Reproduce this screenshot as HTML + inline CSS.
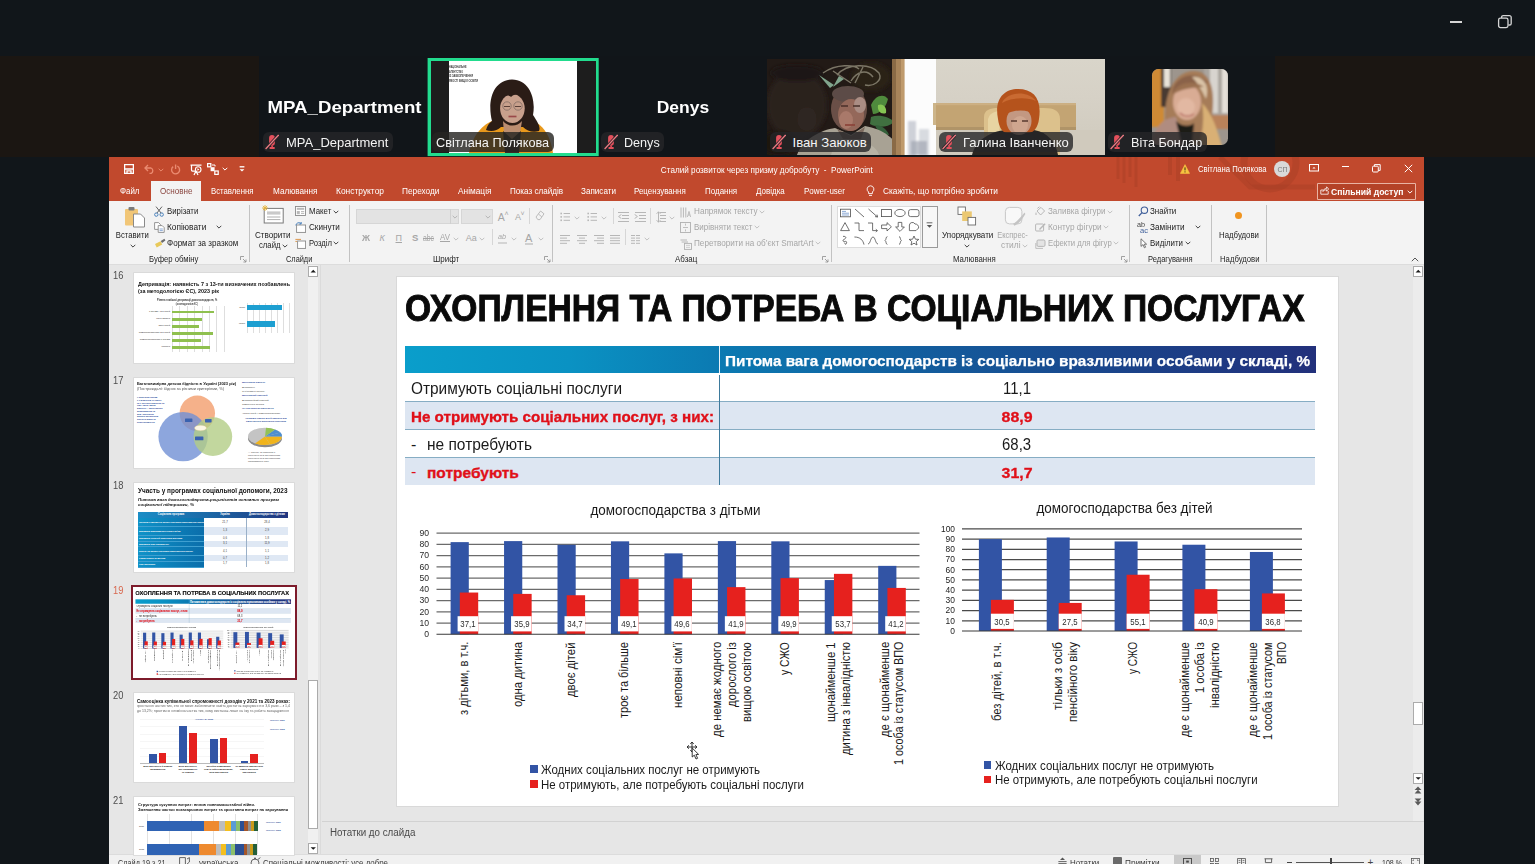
<!DOCTYPE html>
<html lang="uk"><head><meta charset="utf-8"><title>PowerPoint</title><style>
html,body{margin:0;padding:0;}
body{width:1535px;height:864px;overflow:hidden;background:#11161a;position:relative;font-family:"Liberation Sans",sans-serif;}
body div,body svg,body span.t{position:absolute;}
span.t{white-space:pre;display:block;}
.rot{transform:rotate(-90deg);transform-origin:0 0;text-align:right;white-space:pre;}
</style></head><body>
<div style="left:0px;top:56px;width:259px;height:101px;background:#1b1612;"></div>
<div style="left:1275px;top:56px;width:260px;height:101px;background:#1b1612;"></div>
<div style="left:259px;top:56px;width:1016px;height:101px;background:#111519;"></div>
<div style="left:1449.8px;top:21.4px;width:12.2px;height:1.3px;background:#d6d6d6;"></div>
<svg style="left:1497px;top:14px;" width="16" height="16" viewBox="0 0 16 16"><rect x="1.6" y="4.2" width="9.4" height="9.4" rx="1.8" fill="none" stroke="#d6d6d6" stroke-width="1.3"/><path d="M4.6 4 V3.2 A1.6 1.6 0 0 1 6.2 1.6 H12.4 A1.8 1.8 0 0 1 14.2 3.4 V9.4 A1.6 1.6 0 0 1 12.6 11 H11.4" fill="none" stroke="#d6d6d6" stroke-width="1.3"/></svg>
<span class="t" style="top:100.15px;font-size:16.6px;line-height:16.6px;color:#ffffff;font-weight:700;left:276.46px;transform:scaleX(1.1234);transform-origin:50% 0;">MPA_Department</span>
<div style="left:263px;top:131.8px;width:130px;height:20.3px;background:rgba(38,38,40,0.80);border-radius:6px;"></div>
<svg style="left:265.1px;top:134px;" width="14" height="16" viewBox="0 0 14 16"><rect x="4.1" y="1.1" width="5.8" height="10.6" rx="2.9" fill="#e4505c"/><rect x="4.4" y="13.1" width="5.4" height="1.8" rx="0.6" fill="#e4505c"/><rect x="6.3" y="11.4" width="1.6" height="2" fill="#e4505c"/><path d="M0.6 15 L13.6 1" stroke="#2a2628" stroke-width="2.8"/><path d="M0.6 15 L13.6 1" stroke="#f07d86" stroke-width="1.15"/></svg>
<span class="t" style="top:136.23px;font-size:13.2px;line-height:13.2px;color:#f4f4f4;left:286.30px;transform:scaleX(0.9861);transform-origin:0 0;">MPA_Department</span>
<span class="t" style="top:100.15px;font-size:16.6px;line-height:16.6px;color:#ffffff;font-weight:700;left:658.09px;transform:scaleX(1.0540);transform-origin:50% 0;">Denys</span>
<div style="left:601px;top:131.8px;width:63px;height:20.3px;background:rgba(38,38,40,0.80);border-radius:6px;"></div>
<svg style="left:603.6px;top:134px;" width="14" height="16" viewBox="0 0 14 16"><rect x="4.1" y="1.1" width="5.8" height="10.6" rx="2.9" fill="#e4505c"/><rect x="4.4" y="13.1" width="5.4" height="1.8" rx="0.6" fill="#e4505c"/><rect x="6.3" y="11.4" width="1.6" height="2" fill="#e4505c"/><path d="M0.6 15 L13.6 1" stroke="#2a2628" stroke-width="2.8"/><path d="M0.6 15 L13.6 1" stroke="#f07d86" stroke-width="1.15"/></svg>
<span class="t" style="top:136.23px;font-size:13.2px;line-height:13.2px;color:#f4f4f4;left:624.30px;transform:scaleX(0.9548);transform-origin:0 0;">Denys</span>
<div style="left:766.6px;top:59px;width:169.4px;height:96px;overflow:hidden;background:#211915;"><svg style="left:0;top:0" width="170" height="96" viewBox="0 0 170 96"><defs><filter id="b1a" x="-20%" y="-20%" width="140%" height="140%"><feGaussianBlur stdDeviation="1.1"/></filter><filter id="b2a" x="-20%" y="-20%" width="140%" height="140%"><feGaussianBlur stdDeviation="2.2"/></filter><filter id="b0a" x="-20%" y="-20%" width="140%" height="140%"><feGaussianBlur stdDeviation="0.5"/></filter></defs><rect width="126" height="96" fill="#221a16"/><g filter="url(#b2a)"><ellipse cx="30" cy="46" rx="30" ry="34" fill="#2a211d"/><ellipse cx="30" cy="14" rx="26" ry="8" fill="#1d1613"/><ellipse cx="104" cy="18" rx="20" ry="14" fill="#292019"/><ellipse cx="12" cy="84" rx="18" ry="12" fill="#1a1310"/><ellipse cx="40" cy="60" rx="10" ry="12" fill="#2f2621"/></g><g filter="url(#b0a)"><g fill="none" stroke="#85806f" stroke-width="1.4" opacity="0.9"><path d="M56 14 C70 4 88 6 92 10 M70 16 C80 4 104 4 112 14 C116 22 106 28 98 26 M84 22 C90 12 100 10 106 18 M66 12 L84 24 M96 8 L88 24"/></g><g fill="#86ad94" opacity="0.95"><path d="M52 16 L63 29 L67 26 Z"/><path d="M66 28 L72 17 L77 20 Z"/></g><g><path d="M104 46 C108 36 117 34 121 40 C119 49 112 55 106 55 Z" fill="#4f8a3c"/><path d="M104 58 C112 55 123 58 127 63 C120 69 110 69 103 65 Z" fill="#3f7040"/><path d="M111 46 C116 44 120 48 119 54 C114 56 110 52 111 46 Z" fill="#86c552"/><path d="M108 66 C114 66 120 70 122 76 C114 76 110 72 108 66 Z" fill="#35603a"/></g><ellipse cx="82" cy="50" rx="18" ry="22" fill="#6a5046"/><ellipse cx="81" cy="35" rx="16" ry="8" fill="#5c4c46"/><ellipse cx="84" cy="56" rx="13" ry="16" fill="#94685a"/><ellipse cx="79" cy="61" rx="7" ry="9" fill="#a9796a"/><ellipse cx="93" cy="46" rx="6" ry="8" fill="#aa8d84"/><path d="M74 47 H81 M86 47 H93" stroke="#4a3028" stroke-width="1.4"/><path d="M78 66 H88" stroke="#8a4038" stroke-width="1.6"/><path d="M30 96 C36 80 54 71 68 69 L84 76 L98 67 C116 70 130 80 135 96 Z" fill="#a8a294"/><path d="M70 70 L84 77 L98 68 L94 80 L76 80 Z" fill="#7c6a5e"/><path d="M64 96 C66 86 76 82 86 82 C100 82 110 88 112 96 Z" fill="#b7b2a4"/></g><rect x="125" y="0" width="13" height="96" fill="#a8845a"/><rect x="125" y="0" width="4" height="96" fill="#8a6a46"/><rect x="134" y="0" width="4" height="96" fill="#c4a070" opacity="0.8"/><rect x="137.6" y="0" width="33" height="96" fill="#fcfcfc"/><g filter="url(#b1a)"><rect x="141" y="62" width="8" height="36" fill="#c3c6d0" opacity="0.8"/><rect x="152" y="70" width="10" height="28" fill="#d0d3da" opacity="0.8"/><rect x="144" y="82" width="16" height="14" fill="#a2a6b2" opacity="0.7"/></g><rect x="166" y="44" width="4" height="22" fill="#cdb58a"/></svg></div>
<div style="left:770px;top:131.8px;width:101px;height:20.3px;background:rgba(38,38,40,0.80);border-radius:6px;"></div>
<svg style="left:772.1px;top:134px;" width="14" height="16" viewBox="0 0 14 16"><rect x="4.1" y="1.1" width="5.8" height="10.6" rx="2.9" fill="#e4505c"/><rect x="4.4" y="13.1" width="5.4" height="1.8" rx="0.6" fill="#e4505c"/><rect x="6.3" y="11.4" width="1.6" height="2" fill="#e4505c"/><path d="M0.6 15 L13.6 1" stroke="#2a2628" stroke-width="2.8"/><path d="M0.6 15 L13.6 1" stroke="#f07d86" stroke-width="1.15"/></svg>
<span class="t" style="top:136.23px;font-size:13.2px;line-height:13.2px;color:#f4f4f4;left:792.50px;">Іван Заюков</span>
<div style="left:936px;top:59px;width:169px;height:96px;overflow:hidden;background:linear-gradient(180deg,#d9d5ca 0%,#d6d1c6 40%,#cfcabd 100%);"><svg style="left:0;top:0" width="169" height="96" viewBox="0 0 169 96"><defs><filter id="b1b" x="-20%" y="-20%" width="140%" height="140%"><feGaussianBlur stdDeviation="1.1"/></filter><filter id="b2b" x="-20%" y="-20%" width="140%" height="140%"><feGaussianBlur stdDeviation="2.2"/></filter><filter id="b0b" x="-20%" y="-20%" width="140%" height="140%"><feGaussianBlur stdDeviation="0.5"/></filter></defs><rect x="0" y="44.2" width="140" height="26" fill="#c3a473"/><rect x="0" y="44.2" width="140" height="2" fill="#cdb083"/><rect x="0" y="68" width="140" height="3" fill="#b09468"/><rect x="0" y="71" width="169" height="25" fill="#d0cabd"/><g filter="url(#b0b)"><path d="M48 96 V58 C48 51 54 49 62 49 H108 C118 49 124 52 124 60 V96 Z" fill="#dcc18c"/><path d="M52 60 C54 53 60 52 66 52 L62 80 L52 80 Z" fill="#ead8a8" opacity="0.8"/><path d="M36 96 C40 80 56 72 70 71 H98 C112 73 120 84 122 96 Z" fill="#2a2523"/><path d="M62 60 C58 40 68 30 82 30 C98 30 106 40 103 60 C102 68 98 74 92 74 H72 C66 74 63 68 62 60 Z" fill="#b5531f"/><path d="M66 44 C70 34 90 30 100 42 C92 38 76 38 66 44 Z" fill="#c96a30"/><ellipse cx="83" cy="62" rx="12.5" ry="14" fill="#c39882"/><ellipse cx="84" cy="66" rx="8" ry="9" fill="#cfa68f"/><path d="M68 56 C72 44 94 42 100 56 C92 50 78 50 68 56 Z" fill="#b5531f"/><path d="M75 62 H81 M86 62 H92" stroke="#5a3a30" stroke-width="1.3"/><path d="M72 74 C78 78 90 78 96 73 L100 82 H68 Z" fill="#2a2523"/></g></svg></div>
<div style="left:938.9px;top:131.8px;width:133.80000000000007px;height:20.3px;background:rgba(38,38,40,0.80);border-radius:6px;"></div>
<svg style="left:941.6px;top:134px;" width="14" height="16" viewBox="0 0 14 16"><rect x="4.1" y="1.1" width="5.8" height="10.6" rx="2.9" fill="#e4505c"/><rect x="4.4" y="13.1" width="5.4" height="1.8" rx="0.6" fill="#e4505c"/><rect x="6.3" y="11.4" width="1.6" height="2" fill="#e4505c"/><path d="M0.6 15 L13.6 1" stroke="#2a2628" stroke-width="2.8"/><path d="M0.6 15 L13.6 1" stroke="#f07d86" stroke-width="1.15"/></svg>
<span class="t" style="top:136.23px;font-size:13.2px;line-height:13.2px;color:#f4f4f4;left:962.50px;transform:scaleX(0.9891);transform-origin:0 0;">Галина Іванченко</span>
<div style="left:1152px;top:68.8px;width:76px;height:76px;border-radius:6.5px;overflow:hidden;background:#9d958d;"><svg style="left:0;top:0" width="76" height="76" viewBox="0 0 76 76"><defs><filter id="b1c" x="-20%" y="-20%" width="140%" height="140%"><feGaussianBlur stdDeviation="1.1"/></filter><filter id="b2c" x="-20%" y="-20%" width="140%" height="140%"><feGaussianBlur stdDeviation="2.2"/></filter><filter id="b0c" x="-20%" y="-20%" width="140%" height="140%"><feGaussianBlur stdDeviation="0.5"/></filter></defs><g filter="url(#b1c)"><rect x="-2" y="-2" width="14" height="60" fill="#cf8a36"/><rect x="9" y="-2" width="10" height="40" fill="#4a3a30"/><rect x="12" y="-2" width="6" height="20" fill="#e8e2d8"/><rect x="52" y="-2" width="26" height="50" fill="#aaa59f"/><rect x="58" y="-2" width="8" height="46" fill="#d8d4cf"/><rect x="70" y="-2" width="6" height="46" fill="#e4dfd8"/><rect x="60" y="46" width="18" height="14" fill="#b9825a"/><path d="M14 60 C10 30 20 2 42 2 C58 2 64 20 60 48 C62 62 66 70 70 78 H30 Z" fill="#a67c58"/><path d="M20 24 C22 6 44 0 56 14 C44 14 30 18 20 24 Z" fill="#8a6248"/><path d="M40 8 C52 6 58 18 54 30 C50 22 46 14 40 8 Z" fill="#d9c2a6"/><path d="M50 34 C60 44 66 62 70 78 H46 C52 62 52 46 50 34 Z" fill="#d9b074"/><ellipse cx="35" cy="33" rx="14" ry="18" fill="#d9ac94"/><ellipse cx="34" cy="38" rx="9" ry="9" fill="#e2b8a2"/><path d="M20 26 C24 14 40 10 52 18 C42 18 28 20 20 26 Z" fill="#9a7050"/><path d="M-2 78 C2 56 14 48 24 48 L34 78 Z" fill="#b08c80"/><path d="M24 52 C30 58 38 58 42 54 L40 78 H30 Z" fill="#1e1a19"/><path d="M28 44 C32 48 38 48 42 45" stroke="#b56a62" stroke-width="1.4" fill="none"/></g></svg></div>
<div style="left:1108px;top:131.8px;width:98.79999999999995px;height:20.3px;background:rgba(38,38,40,0.80);border-radius:6px;"></div>
<svg style="left:1110.1px;top:134px;" width="14" height="16" viewBox="0 0 14 16"><rect x="4.1" y="1.1" width="5.8" height="10.6" rx="2.9" fill="#e4505c"/><rect x="4.4" y="13.1" width="5.4" height="1.8" rx="0.6" fill="#e4505c"/><rect x="6.3" y="11.4" width="1.6" height="2" fill="#e4505c"/><path d="M0.6 15 L13.6 1" stroke="#2a2628" stroke-width="2.8"/><path d="M0.6 15 L13.6 1" stroke="#f07d86" stroke-width="1.15"/></svg>
<span class="t" style="top:136.23px;font-size:13.2px;line-height:13.2px;color:#f4f4f4;left:1131.30px;transform:scaleX(0.9587);transform-origin:0 0;">Віта Бондар</span>
<svg style="left:427px;top:57px;" width="173" height="100" viewBox="0 0 173 100"><rect x="0.6" y="1" width="171.1" height="98.1" fill="#22dc8e"/></svg><div style="left:430.6px;top:61px;width:165px;height:92px;overflow:hidden;background:#1d1d1d;"><div style="left:18.2px;top:0;width:128px;height:92px;background:#ffffff;"></div><svg style="left:0;top:0" width="165" height="92" viewBox="0 0 165 92"><defs><filter id="b1d" x="-20%" y="-20%" width="140%" height="140%"><feGaussianBlur stdDeviation="1.1"/></filter><filter id="b2d" x="-20%" y="-20%" width="140%" height="140%"><feGaussianBlur stdDeviation="2.2"/></filter><filter id="b0d" x="-20%" y="-20%" width="140%" height="140%"><feGaussianBlur stdDeviation="0.5"/></filter></defs><g filter="url(#b0d)"><path d="M38 92 C42 72 54 61 66 58.5 H97 C110 61 119 72 122 92 Z" fill="#e8991c"/><path d="M61 60 C56 40 62 19 81 18.5 C99 19 105 38 102 54 C106 60 110 66 108 70 C102 72 96 70 92 66 L70 66 C66 70 60 71 55 69 C56 65 58 62 61 60 Z" fill="#2b1d19"/><ellipse cx="81.4" cy="47.6" rx="12.3" ry="14.5" fill="#c8a08c"/><path d="M66 44 C64 26 96 24 97 44 C92 34 86 31 80 36 C76 32 70 36 66 44 Z" fill="#2b1d19"/><g fill="none" stroke="#8a7268" stroke-width="0.9"><circle cx="76" cy="45" r="4.2"/><circle cx="87" cy="45" r="4.2"/></g><path d="M73 45.5 H79 M84 45.5 H90" stroke="#5a4038" stroke-width="1.1"/><path d="M77.5 55.5 H85.5" stroke="#9a4a48" stroke-width="1.7"/><path d="M72 60 C77 66 86 66 91 60 L89 72 L81 78 L73 72 Z" fill="#bb8d70"/><path d="M72 70 L81 78 L90 70 L88 92 H74 Z" fill="#3a2a22"/></g></svg></div>
<span class="t" style="top:64.81px;font-size:4px;line-height:4px;color:#3a3a3a;font-weight:700;left:449.30px;transform:scaleX(0.5833);transform-origin:0 0;">НАЦІОНАЛЬНЕ</span>
<span class="t" style="top:69.61px;font-size:4px;line-height:4px;color:#3a3a3a;font-weight:700;left:449.30px;transform:scaleX(0.5762);transform-origin:0 0;">АГЕНТСТВО</span>
<span class="t" style="top:74.41px;font-size:4px;line-height:4px;color:#3a3a3a;font-weight:700;left:449.30px;transform:scaleX(0.6339);transform-origin:0 0;">ІЗ ЗАБЕЗПЕЧЕННЯ</span>
<span class="t" style="top:79.21px;font-size:4px;line-height:4px;color:#3a3a3a;font-weight:700;left:449.30px;transform:scaleX(0.6253);transform-origin:0 0;">ЯКОСТІ ВИЩОЇ ОСВІТИ</span>
<div style="left:431.6px;top:131.8px;width:122.19999999999993px;height:20.3px;background:rgba(38,36,34,0.82);border-radius:6px;"></div>
<span class="t" style="top:136.23px;font-size:13.2px;line-height:13.2px;color:#f4f4f4;left:435.80px;transform:scaleX(0.9648);transform-origin:0 0;">Світлана Полякова</span>
<div style="left:109px;top:157px;width:1315px;height:707px;background:#e6e6e6;"></div>
<div style="left:109px;top:157px;width:1315px;height:44px;background:#c1492d;"></div>
<svg style="left:1100px;top:157px;" width="230" height="44" viewBox="0 0 230 44"><g fill="none" stroke="#a33d24" stroke-opacity="0.38"><path d="M18 0 V22 M24 0 V26 M30 0 V20 M36 0 V30" stroke-width="3"/><path d="M70 0 V18 M78 0 V24" stroke-width="4"/><circle cx="170" cy="6" r="26" stroke-width="7"/><path d="M120 0 L150 30 L215 30" stroke-width="5"/></g></svg>
<svg style="left:124px;top:164px;" width="10" height="10" viewBox="0 0 10 10"><path d="M0.6 0.6 H9.4 V9.4 H0.6 Z M0.6 5 H9.4 M3 9.4 V6.8 H7 V9.4" fill="none" stroke="#ffffff" stroke-width="1.35"/></svg>
<svg style="left:144px;top:164px;" width="11" height="10" viewBox="0 0 11 10"><path d="M4 1 L1 4 L4 7 M1 4 H7 A3 3 0 0 1 7 9.5 H5.5" fill="none" stroke="#ea8a70" stroke-width="1.35"/></svg>
<svg style="left:157.5px;top:167.5px;" width="6" height="4" viewBox="0 0 6 4"><path d="M0.7 0.8 L3 3.1 L5.3 0.8" fill="none" stroke="#ea8a70" stroke-width="1"/></svg>
<svg style="left:170px;top:163.5px;" width="11" height="11" viewBox="0 0 11 11"><path d="M7.3 2.2 A4 4 0 1 1 3.2 2.6 M5.6 0.5 V5" fill="none" stroke="#ea8a70" stroke-width="1.35"/></svg>
<svg style="left:189.5px;top:163.5px;" width="12" height="12" viewBox="0 0 12 12"><path d="M0.5 1 H11.5 M1.5 1 V6 A1 1 0 0 0 2.5 7 H5 M6 7 L4 11 M6 7 L8 11" fill="none" stroke="#ffffff" stroke-width="1.25"/><circle cx="8.2" cy="5.5" r="2.8" fill="none" stroke="#ffffff" stroke-width="1.1"/><path d="M7.4 4.3 L9.4 5.5 L7.4 6.7 Z" fill="#ffffff"/></svg>
<svg style="left:207px;top:163px;" width="12" height="12" viewBox="0 0 12 12"><rect x="0.6" y="0.6" width="3.2" height="3.2" fill="none" stroke="#ffffff" stroke-width="1.25"/><rect x="3.6" y="4.2" width="4" height="4" fill="#ffffff"/><rect x="7.8" y="8" width="3.4" height="3.4" fill="none" stroke="#ffffff" stroke-width="1.25"/><path d="M5 2 H8 V3.5" fill="none" stroke="#ffffff" stroke-width="1"/></svg>
<svg style="left:222.2px;top:167px;" width="6" height="4" viewBox="0 0 6 4"><path d="M0.7 0.8 L3 3.1 L5.3 0.8" fill="none" stroke="#ffffff" stroke-width="1"/></svg>
<svg style="left:238.5px;top:166px;" width="6" height="7" viewBox="0 0 6 7"><path d="M0.6 0.8 H5.4" stroke="#ffffff" stroke-width="1.35"/><path d="M0.6 3.2 L3 5.6 L5.4 3.2 Z" fill="#ffffff"/></svg>
<span class="t" style="top:165.98px;font-size:9px;line-height:9px;color:#ffffff;left:649.63px;transform:scaleX(0.9070);transform-origin:50% 0;">Сталий розвиток через призму добробуту  -  PowerPoint</span>
<svg style="left:1180px;top:164px;" width="10" height="10" viewBox="0 0 10 10"><path d="M5 0.6 L9.6 9.4 H0.4 Z" fill="#f6c341" stroke="#f6c341" stroke-width="0.6" stroke-linejoin="round"/><path d="M5 3.4 V6.4 M5 7.4 V8.4" stroke="#3a2a10" stroke-width="1"/></svg>
<span class="t" style="top:164.98px;font-size:9px;line-height:9px;color:#ffffff;left:1198.00px;transform:scaleX(0.8554);transform-origin:0 0;">Світлана Полякова</span>
<div style="left:1274px;top:161px;width:16px;height:16px;background:#d9d9d9;border-radius:50%;"></div>
<span class="t" style="top:165.85px;font-size:7.5px;line-height:7.5px;color:#7a7a7a;left:1276.59px;transform:scaleX(0.9249);transform-origin:50% 0;">СП</span>
<svg style="left:1308.5px;top:164px;" width="10" height="8" viewBox="0 0 10 8"><rect x="0.5" y="0.5" width="9" height="6.5" fill="none" stroke="#fff" stroke-width="1"/><path d="M3.4 4.6 L5 3 L6.6 4.6 Z" fill="#fff"/></svg>
<div style="left:1342px;top:166.3px;width:7px;height:1px;background:#ffffff;"></div>
<svg style="left:1372px;top:163.5px;" width="9" height="9" viewBox="0 0 9 9"><rect x="0.5" y="2.2" width="5.8" height="5.8" fill="none" stroke="#fff" stroke-width="1" rx="1"/><path d="M2.4 2.2 V0.6 H8.2 V6.4 H6.4" fill="none" stroke="#fff" stroke-width="1"/></svg>
<svg style="left:1404px;top:163.5px;" width="9" height="9" viewBox="0 0 9 9"><path d="M0.8 0.8 L8.2 8.2 M8.2 0.8 L0.8 8.2" stroke="#fff" stroke-width="1"/></svg>
<div style="left:151px;top:180.7px;width:50px;height:21px;background:#f3f3f3;"></div>
<span class="t" style="top:187.48px;font-size:9px;line-height:9px;color:#ffffff;left:119.50px;transform:scaleX(0.8807);transform-origin:0 0;">Файл</span>
<span class="t" style="top:187.48px;font-size:9px;line-height:9px;color:#8a4640;left:159.50px;transform:scaleX(0.8969);transform-origin:0 0;">Основне</span>
<span class="t" style="top:187.48px;font-size:9px;line-height:9px;color:#ffffff;left:210.50px;transform:scaleX(0.8640);transform-origin:0 0;">Вставлення</span>
<span class="t" style="top:187.48px;font-size:9px;line-height:9px;color:#ffffff;left:272.50px;transform:scaleX(0.9061);transform-origin:0 0;">Малювання</span>
<span class="t" style="top:187.48px;font-size:9px;line-height:9px;color:#ffffff;left:335.50px;transform:scaleX(0.9352);transform-origin:0 0;">Конструктор</span>
<span class="t" style="top:187.48px;font-size:9px;line-height:9px;color:#ffffff;left:402.00px;transform:scaleX(0.9195);transform-origin:0 0;">Переходи</span>
<span class="t" style="top:187.48px;font-size:9px;line-height:9px;color:#ffffff;left:457.50px;transform:scaleX(0.9253);transform-origin:0 0;">Анімація</span>
<span class="t" style="top:187.48px;font-size:9px;line-height:9px;color:#ffffff;left:509.70px;transform:scaleX(0.8988);transform-origin:0 0;">Показ слайдів</span>
<span class="t" style="top:187.48px;font-size:9px;line-height:9px;color:#ffffff;left:580.70px;transform:scaleX(0.9018);transform-origin:0 0;">Записати</span>
<span class="t" style="top:187.48px;font-size:9px;line-height:9px;color:#ffffff;left:634.20px;transform:scaleX(0.8829);transform-origin:0 0;">Рецензування</span>
<span class="t" style="top:187.48px;font-size:9px;line-height:9px;color:#ffffff;left:705.20px;transform:scaleX(0.8856);transform-origin:0 0;">Подання</span>
<span class="t" style="top:187.48px;font-size:9px;line-height:9px;color:#ffffff;left:756.00px;transform:scaleX(0.8896);transform-origin:0 0;">Довідка</span>
<span class="t" style="top:187.48px;font-size:9px;line-height:9px;color:#ffffff;left:803.50px;transform:scaleX(0.8910);transform-origin:0 0;">Power-user</span>
<svg style="left:865.5px;top:185px;" width="9" height="12" viewBox="0 0 9 12"><path d="M4.5 0.8 A3.4 3.4 0 0 1 6.4 7 V8.6 H2.6 V7 A3.4 3.4 0 0 1 4.5 0.8 Z M3 10.4 H6" fill="none" stroke="#fff" stroke-width="0.9"/></svg>
<span class="t" style="top:187.48px;font-size:9px;line-height:9px;color:#ffffff;left:883.00px;transform:scaleX(0.9259);transform-origin:0 0;">Скажіть, що потрібно зробити</span>
<div style="left:1317px;top:182.5px;width:98.5px;height:17px;background:rgba(170,60,35,0.55);box-shadow:inset 0 0 0 1px #e9b3a3;border-radius:1px;"></div>
<svg style="left:1320px;top:186px;" width="9" height="9" viewBox="0 0 9 9"><path d="M0.8 8.2 V4 H3 M8.2 5 V8.2 H0.8 M3 5.5 C3.4 3.2 5 2.4 6.6 2.4 V0.8 L8.6 3 L6.6 5.2 V3.8 C5 3.8 4 4.2 3 5.5 Z" fill="none" stroke="#fff" stroke-width="0.8"/></svg>
<span class="t" style="top:187.06px;font-size:9.5px;line-height:9.5px;color:#ffffff;font-weight:700;left:1331.30px;transform:scaleX(0.9054);transform-origin:0 0;">Спільний доступ</span>
<svg style="left:1407px;top:189.5px;" width="6" height="4" viewBox="0 0 6 4"><path d="M0.7 0.8 L3 3.1 L5.3 0.8" fill="none" stroke="#fff" stroke-width="1"/></svg>
<div style="left:109px;top:201px;width:1315px;height:63px;background:#f3f3f3;"></div>
<div style="left:109px;top:264px;width:1315px;height:1px;background:#dcdcdc;"></div>
<div style="left:248.5px;top:204.5px;width:1px;height:57px;background:#c2c2c2;"></div>
<div style="left:349px;top:204.5px;width:1px;height:57px;background:#c2c2c2;"></div>
<div style="left:552px;top:204.5px;width:1px;height:57px;background:#c2c2c2;"></div>
<div style="left:830.7px;top:204.5px;width:1px;height:57px;background:#c2c2c2;"></div>
<div style="left:1129.3px;top:204.5px;width:1px;height:57px;background:#c2c2c2;"></div>
<div style="left:1211.2px;top:204.5px;width:1px;height:57px;background:#c2c2c2;"></div>
<div style="left:1266.3px;top:204.5px;width:1px;height:57px;background:#c2c2c2;"></div>
<span class="t" style="top:254.50px;font-size:8.5px;line-height:8.5px;color:#262626;left:148.70px;transform:scaleX(0.9054);transform-origin:0 0;">Буфер обміну</span>
<span class="t" style="top:254.50px;font-size:8.5px;line-height:8.5px;color:#262626;left:285.70px;transform:scaleX(0.8685);transform-origin:0 0;">Слайди</span>
<span class="t" style="top:254.50px;font-size:8.5px;line-height:8.5px;color:#262626;left:432.50px;transform:scaleX(0.9368);transform-origin:0 0;">Шрифт</span>
<span class="t" style="top:254.50px;font-size:8.5px;line-height:8.5px;color:#262626;left:674.70px;transform:scaleX(0.9346);transform-origin:0 0;">Абзац</span>
<span class="t" style="top:254.50px;font-size:8.5px;line-height:8.5px;color:#262626;left:953.00px;transform:scaleX(0.9204);transform-origin:0 0;">Малювання</span>
<span class="t" style="top:254.50px;font-size:8.5px;line-height:8.5px;color:#262626;left:1148.00px;transform:scaleX(0.8897);transform-origin:0 0;">Редагування</span>
<span class="t" style="top:254.50px;font-size:8.5px;line-height:8.5px;color:#262626;left:1219.50px;transform:scaleX(0.9094);transform-origin:0 0;">Надбудови</span>
<svg style="left:240px;top:256px;" width="7" height="7" viewBox="0 0 7 7"><path d="M0.5 4 V0.5 H4 M3 3 L6 6 M6 3.4 V6 H3.4" fill="none" stroke="#8c8c8c" stroke-width="0.8"/></svg>
<svg style="left:543.5px;top:256px;" width="7" height="7" viewBox="0 0 7 7"><path d="M0.5 4 V0.5 H4 M3 3 L6 6 M6 3.4 V6 H3.4" fill="none" stroke="#8c8c8c" stroke-width="0.8"/></svg>
<svg style="left:822px;top:256px;" width="7" height="7" viewBox="0 0 7 7"><path d="M0.5 4 V0.5 H4 M3 3 L6 6 M6 3.4 V6 H3.4" fill="none" stroke="#8c8c8c" stroke-width="0.8"/></svg>
<svg style="left:1120.7px;top:256px;" width="7" height="7" viewBox="0 0 7 7"><path d="M0.5 4 V0.5 H4 M3 3 L6 6 M6 3.4 V6 H3.4" fill="none" stroke="#8c8c8c" stroke-width="0.8"/></svg>
<svg style="left:123.5px;top:206px;" width="22" height="22" viewBox="0 0 22 22"><rect x="1" y="3" width="13" height="16.5" rx="1" fill="#f1c677"/><rect x="4.5" y="1" width="6" height="3.6" rx="1" fill="#7a7a7a"/><path d="M9.5 8 H16.5 L20.5 12 V21 H9.5 Z" fill="#fff" stroke="#8a8a8a" stroke-width="1"/></svg>
<span class="t" style="top:230.98px;font-size:9px;line-height:9px;color:#1e1e1e;left:113.25px;transform:scaleX(0.8571);transform-origin:50% 0;">Вставити</span>
<svg style="left:129.5px;top:243.5px;" width="6" height="4" viewBox="0 0 6 4"><path d="M0.7 0.8 L3 3.1 L5.3 0.8" fill="none" stroke="#444" stroke-width="1"/></svg>
<svg style="left:153.5px;top:206px;" width="10" height="11" viewBox="0 0 10 11"><path d="M2 0.6 L7.2 7.2 M8 0.6 L2.8 7.2" stroke="#555" stroke-width="0.9" fill="none"/><circle cx="2.3" cy="8.6" r="1.7" fill="none" stroke="#3c78b8" stroke-width="0.9"/><circle cx="7.7" cy="8.6" r="1.7" fill="none" stroke="#3c78b8" stroke-width="0.9"/></svg>
<span class="t" style="top:207.38px;font-size:9px;line-height:9px;color:#1e1e1e;left:166.70px;transform:scaleX(0.8664);transform-origin:0 0;">Вирізати</span>
<svg style="left:153.5px;top:221.5px;" width="11" height="11" viewBox="0 0 11 11"><path d="M0.6 0.6 H4.6 L6.4 2.4 V7.4 H0.6 Z" fill="#fff" stroke="#8a8a8a" stroke-width="0.9"/><path d="M4.2 3.6 H8.2 L10.2 5.6 V10.4 H4.2 Z" fill="#fff" stroke="#8a8a8a" stroke-width="0.9"/><path d="M5.6 7 H8.8 M5.6 8.6 H8.8" stroke="#5b87c4" stroke-width="0.7"/></svg>
<span class="t" style="top:223.08px;font-size:9px;line-height:9px;color:#1e1e1e;left:166.70px;transform:scaleX(0.9244);transform-origin:0 0;">Копіювати</span>
<svg style="left:216px;top:225px;" width="6" height="4" viewBox="0 0 6 4"><path d="M0.7 0.8 L3 3.1 L5.3 0.8" fill="none" stroke="#444" stroke-width="1"/></svg>
<svg style="left:153.5px;top:237.5px;" width="12" height="11" viewBox="0 0 12 11"><path d="M1 6 L6.5 3.2 L8.2 6.6 L2.7 9.4 Z" fill="#e8c95a"/><path d="M6.8 3 L10.4 0.8 L11.4 2.6 L8 5 Z" fill="#6b6b6b"/></svg>
<span class="t" style="top:238.88px;font-size:9px;line-height:9px;color:#1e1e1e;left:166.70px;transform:scaleX(0.8969);transform-origin:0 0;">Формат за зразком</span>
<svg style="left:261.5px;top:205px;" width="23" height="20" viewBox="0 0 23 20"><rect x="2.2" y="3.4" width="19" height="14.6" fill="#fff" stroke="#7a7a7a" stroke-width="1"/><rect x="5" y="6.4" width="13.4" height="3.2" fill="#c9c9c9"/><path d="M5 12 H18.4 M5 14.6 H18.4" stroke="#9a9a9a" stroke-width="0.8"/><path d="M3 0 V6 M0 3 H6 M0.9 0.9 L5.1 5.1 M5.1 0.9 L0.9 5.1" stroke="#e8b43a" stroke-width="0.9"/></svg>
<span class="t" style="top:230.98px;font-size:9px;line-height:9px;color:#1e1e1e;left:253.45px;transform:scaleX(0.9013);transform-origin:50% 0;">Створити</span>
<span class="t" style="top:241.18px;font-size:9px;line-height:9px;color:#1e1e1e;left:259.00px;transform:scaleX(0.8584);transform-origin:0 0;">слайд</span>
<svg style="left:282px;top:243.5px;" width="6" height="4" viewBox="0 0 6 4"><path d="M0.7 0.8 L3 3.1 L5.3 0.8" fill="none" stroke="#444" stroke-width="1"/></svg>
<svg style="left:295px;top:206px;" width="11" height="10" viewBox="0 0 11 10"><rect x="0.5" y="0.5" width="10" height="9" fill="#fff" stroke="#8a8a8a" stroke-width="0.9"/><rect x="1.8" y="1.8" width="7.4" height="2" fill="#b9b9b9"/><rect x="1.8" y="5" width="3" height="3.2" fill="#b9b9b9"/><path d="M6 5.6 H9.2 M6 7.4 H9.2" stroke="#9a9a9a" stroke-width="0.7"/></svg>
<span class="t" style="top:207.38px;font-size:9px;line-height:9px;color:#1e1e1e;left:308.70px;transform:scaleX(0.8750);transform-origin:0 0;">Макет</span>
<svg style="left:333px;top:209.5px;" width="6" height="4" viewBox="0 0 6 4"><path d="M0.7 0.8 L3 3.1 L5.3 0.8" fill="none" stroke="#444" stroke-width="1"/></svg>
<svg style="left:295px;top:221.5px;" width="11" height="11" viewBox="0 0 11 11"><rect x="1.6" y="3" width="9" height="7.4" fill="#fff" stroke="#8a8a8a" stroke-width="0.9"/><path d="M0.8 3.4 A3.2 3.2 0 0 1 6 1.4 M6.2 0 V2 H4.2" fill="none" stroke="#3c78b8" stroke-width="0.9"/></svg>
<span class="t" style="top:223.08px;font-size:9px;line-height:9px;color:#1e1e1e;left:308.70px;transform:scaleX(0.9034);transform-origin:0 0;">Скинути</span>
<svg style="left:295px;top:237.5px;" width="11" height="11" viewBox="0 0 11 11"><rect x="2.6" y="3" width="8" height="7.4" fill="#fff" stroke="#8a8a8a" stroke-width="0.9"/><path d="M0.4 1.4 H6 M0.4 3.4 H2" stroke="#d98c3a" stroke-width="0.9"/></svg>
<span class="t" style="top:238.88px;font-size:9px;line-height:9px;color:#1e1e1e;left:308.70px;transform:scaleX(0.8533);transform-origin:0 0;">Розділ</span>
<svg style="left:333px;top:241px;" width="6" height="4" viewBox="0 0 6 4"><path d="M0.7 0.8 L3 3.1 L5.3 0.8" fill="none" stroke="#444" stroke-width="1"/></svg>
<div style="left:355.7px;top:209px;width:103.5px;height:15px;background:#e3e3e3;box-shadow:inset 0 0 0 1px #d6d6d6;"></div>
<div style="left:450px;top:209px;width:1px;height:15px;background:#d0d0d0;"></div>
<svg style="left:451.7px;top:215px;" width="6" height="4" viewBox="0 0 6 4"><path d="M0.7 0.8 L3 3.1 L5.3 0.8" fill="none" stroke="#b5b5b5" stroke-width="1"/></svg>
<div style="left:461px;top:209px;width:31.7px;height:15px;background:#e3e3e3;box-shadow:inset 0 0 0 1px #d6d6d6;"></div>
<svg style="left:484.5px;top:215px;" width="6" height="4" viewBox="0 0 6 4"><path d="M0.7 0.8 L3 3.1 L5.3 0.8" fill="none" stroke="#b5b5b5" stroke-width="1"/></svg>
<span class="t" style="top:211.61px;font-size:10.5px;line-height:10.5px;color:#a6a6a6;left:497.70px;">A</span>
<span class="t" style="top:209.57px;font-size:7px;line-height:7px;color:#a6a6a6;left:504.50px;">˄</span>
<span class="t" style="top:212.88px;font-size:9px;line-height:9px;color:#a6a6a6;left:515.00px;">A</span>
<span class="t" style="top:209.57px;font-size:7px;line-height:7px;color:#a6a6a6;left:520.50px;">˅</span>
<div style="left:528.5px;top:208px;width:1px;height:16px;background:#d6d6d6;"></div>
<svg style="left:534.5px;top:210px;" width="10" height="11" viewBox="0 0 10 11"><path d="M1 7 L5.6 1 L9 3.8 L5 9.6 H2.8 Z M3.4 4 L6.8 6.8" fill="none" stroke="#b5b5b5" stroke-width="0.9"/></svg>
<span class="t" style="top:233.88px;font-size:9px;line-height:9px;color:#a6a6a6;font-weight:700;left:362.00px;transform:scaleX(0.9827);transform-origin:0 0;">Ж</span>
<span class="t" style="top:233.88px;font-size:9px;line-height:9px;color:#a6a6a6;font-style:italic;left:379.50px;">К</span>
<span class="t" style="top:233.88px;font-size:9px;line-height:9px;color:#a6a6a6;left:395.50px;text-decoration:underline;">П</span>
<span class="t" style="top:233.46px;font-size:9.5px;line-height:9.5px;color:#a6a6a6;font-weight:700;left:412.00px;">S</span>
<span class="t" style="top:234.30px;font-size:8.5px;line-height:8.5px;color:#a6a6a6;left:423.00px;transform:scaleX(0.8018);transform-origin:0 0;text-decoration:line-through;">abc</span>
<span class="t" style="top:232.80px;font-size:8.5px;line-height:8.5px;color:#a6a6a6;left:440.00px;transform:scaleX(0.9329);transform-origin:0 0;text-decoration:underline;">AV</span>
<svg style="left:452.5px;top:236.5px;" width="6" height="4" viewBox="0 0 6 4"><path d="M0.7 0.8 L3 3.1 L5.3 0.8" fill="none" stroke="#c0c0c0" stroke-width="1"/></svg>
<span class="t" style="top:233.88px;font-size:9px;line-height:9px;color:#a6a6a6;left:465.70px;">Aa</span>
<svg style="left:478.5px;top:236.5px;" width="6" height="4" viewBox="0 0 6 4"><path d="M0.7 0.8 L3 3.1 L5.3 0.8" fill="none" stroke="#c0c0c0" stroke-width="1"/></svg>
<div style="left:491.5px;top:229px;width:1px;height:16px;background:#d6d6d6;"></div>
<span class="t" style="top:232.73px;font-size:8px;line-height:8px;color:#a6a6a6;font-style:italic;left:497.70px;transform:scaleX(0.8982);transform-origin:0 0;">ab</span>
<div style="left:497.7px;top:241.5px;width:9px;height:2px;background:#d4d4d4;"></div>
<svg style="left:511px;top:236.5px;" width="6" height="4" viewBox="0 0 6 4"><path d="M0.7 0.8 L3 3.1 L5.3 0.8" fill="none" stroke="#c0c0c0" stroke-width="1"/></svg>
<span class="t" style="top:232.69px;font-size:11px;line-height:11px;color:#a6a6a6;left:525.00px;">A</span>
<div style="left:525px;top:243.2px;width:8px;height:1.6px;background:#cfcfcf;"></div>
<svg style="left:538px;top:236.5px;" width="6" height="4" viewBox="0 0 6 4"><path d="M0.7 0.8 L3 3.1 L5.3 0.8" fill="none" stroke="#c0c0c0" stroke-width="1"/></svg>
<svg style="left:560px;top:211.5px;" width="11" height="11" viewBox="0 0 11 11"><path d="M3.6 1.5 H10" stroke="#b0b0b0" stroke-width="0.9"/><rect x="0.4" y="0.7" width="1.6" height="1.6" fill="#b8b8b8"/><path d="M3.6 4.9 H10" stroke="#b0b0b0" stroke-width="0.9"/><rect x="0.4" y="4.1000000000000005" width="1.6" height="1.6" fill="#b8b8b8"/><path d="M3.6 8.3 H10" stroke="#b0b0b0" stroke-width="0.9"/><rect x="0.4" y="7.500000000000001" width="1.6" height="1.6" fill="#b8b8b8"/></svg>
<svg style="left:574px;top:215.5px;" width="6" height="4" viewBox="0 0 6 4"><path d="M0.7 0.8 L3 3.1 L5.3 0.8" fill="none" stroke="#c0c0c0" stroke-width="1"/></svg>
<svg style="left:587px;top:211.5px;" width="11" height="11" viewBox="0 0 11 11"><path d="M3.6 1.5 H10" stroke="#b0b0b0" stroke-width="0.9"/><rect x="0.4" y="0.7" width="1.6" height="1.6" fill="#b8b8b8"/><path d="M3.6 4.9 H10" stroke="#b0b0b0" stroke-width="0.9"/><rect x="0.4" y="4.1000000000000005" width="1.6" height="1.6" fill="#b8b8b8"/><path d="M3.6 8.3 H10" stroke="#b0b0b0" stroke-width="0.9"/><rect x="0.4" y="7.500000000000001" width="1.6" height="1.6" fill="#b8b8b8"/></svg>
<svg style="left:601px;top:215.5px;" width="6" height="4" viewBox="0 0 6 4"><path d="M0.7 0.8 L3 3.1 L5.3 0.8" fill="none" stroke="#c0c0c0" stroke-width="1"/></svg>
<div style="left:612.7px;top:208px;width:1px;height:16px;background:#d6d6d6;"></div>
<svg style="left:618px;top:211.5px;" width="12" height="12" viewBox="0 0 12 12"><path d="M0 0.5 H11" stroke="#b0b0b0" stroke-width="0.9"/><path d="M4 3.5 H11" stroke="#b0b0b0" stroke-width="0.9"/><path d="M4 6.5 H11" stroke="#b0b0b0" stroke-width="0.9"/><path d="M0 9.5 H11" stroke="#b0b0b0" stroke-width="0.9"/></svg>
<svg style="left:617.5px;top:213.5px;" width="4" height="5" viewBox="0 0 4 5"><path d="M3.4 0.4 L0.6 2.5 L3.4 4.6" fill="none" stroke="#b0b0b0" stroke-width="0.9"/></svg>
<svg style="left:634.5px;top:211.5px;" width="12" height="12" viewBox="0 0 12 12"><path d="M0 0.5 H11" stroke="#b0b0b0" stroke-width="0.9"/><path d="M4 3.5 H11" stroke="#b0b0b0" stroke-width="0.9"/><path d="M4 6.5 H11" stroke="#b0b0b0" stroke-width="0.9"/><path d="M0 9.5 H11" stroke="#b0b0b0" stroke-width="0.9"/></svg>
<svg style="left:634px;top:213.5px;" width="4" height="5" viewBox="0 0 4 5"><path d="M0.6 0.4 L3.4 2.5 L0.6 4.6" fill="none" stroke="#b0b0b0" stroke-width="0.9"/></svg>
<div style="left:650px;top:208px;width:1px;height:16px;background:#d6d6d6;"></div>
<svg style="left:660px;top:211.5px;" width="12" height="12" viewBox="0 0 12 12"><path d="M0 0.5 H6" stroke="#b0b0b0" stroke-width="0.9"/><path d="M0 3.5 H6" stroke="#b0b0b0" stroke-width="0.9"/><path d="M0 6.5 H6" stroke="#b0b0b0" stroke-width="0.9"/><path d="M0 9.5 H6" stroke="#b0b0b0" stroke-width="0.9"/></svg>
<svg style="left:655.5px;top:210.5px;" width="5" height="12" viewBox="0 0 5 12"><path d="M2.5 0.8 V11.2 M0.6 2.8 L2.5 0.8 L4.4 2.8 M0.6 9.2 L2.5 11.2 L4.4 9.2" fill="none" stroke="#b0b0b0" stroke-width="0.9"/></svg>
<svg style="left:668.5px;top:215.5px;" width="6" height="4" viewBox="0 0 6 4"><path d="M0.7 0.8 L3 3.1 L5.3 0.8" fill="none" stroke="#c0c0c0" stroke-width="1"/></svg>
<svg style="left:560px;top:234.5px;" width="12" height="12" viewBox="0 0 12 12"><path d="M0 0.5 H10" stroke="#b0b0b0" stroke-width="0.9"/><path d="M0 3.1 H7" stroke="#b0b0b0" stroke-width="0.9"/><path d="M0 5.7 H10" stroke="#b0b0b0" stroke-width="0.9"/><path d="M0 8.3 H7" stroke="#b0b0b0" stroke-width="0.9"/></svg>
<svg style="left:577px;top:234.5px;" width="12" height="12" viewBox="0 0 12 12"><path d="M0 0.5 H10" stroke="#b0b0b0" stroke-width="0.9"/><path d="M2 3.1 H8" stroke="#b0b0b0" stroke-width="0.9"/><path d="M0 5.7 H10" stroke="#b0b0b0" stroke-width="0.9"/><path d="M2 8.3 H8" stroke="#b0b0b0" stroke-width="0.9"/></svg>
<svg style="left:593.5px;top:234.5px;" width="12" height="12" viewBox="0 0 12 12"><path d="M0 0.5 H10" stroke="#b0b0b0" stroke-width="0.9"/><path d="M3 3.1 H10" stroke="#b0b0b0" stroke-width="0.9"/><path d="M0 5.7 H10" stroke="#b0b0b0" stroke-width="0.9"/><path d="M3 8.3 H10" stroke="#b0b0b0" stroke-width="0.9"/></svg>
<svg style="left:609.5px;top:234.5px;" width="12" height="12" viewBox="0 0 12 12"><path d="M0 0.5 H10" stroke="#b0b0b0" stroke-width="0.9"/><path d="M0 3.1 H10" stroke="#b0b0b0" stroke-width="0.9"/><path d="M0 5.7 H10" stroke="#b0b0b0" stroke-width="0.9"/><path d="M0 8.3 H10" stroke="#b0b0b0" stroke-width="0.9"/></svg>
<div style="left:625px;top:229px;width:1px;height:16px;background:#d6d6d6;"></div>
<svg style="left:630.7px;top:234.5px;" width="12" height="12" viewBox="0 0 12 12"><path d="M0 0.5 H4" stroke="#b0b0b0" stroke-width="0.9"/><path d="M0 3.1 H4" stroke="#b0b0b0" stroke-width="0.9"/><path d="M0 5.7 H4" stroke="#b0b0b0" stroke-width="0.9"/><path d="M0 8.3 H4" stroke="#b0b0b0" stroke-width="0.9"/></svg>
<svg style="left:636px;top:234.5px;" width="12" height="12" viewBox="0 0 12 12"><path d="M0 0.5 H4" stroke="#b0b0b0" stroke-width="0.9"/><path d="M0 3.1 H4" stroke="#b0b0b0" stroke-width="0.9"/><path d="M0 5.7 H4" stroke="#b0b0b0" stroke-width="0.9"/><path d="M0 8.3 H4" stroke="#b0b0b0" stroke-width="0.9"/></svg>
<svg style="left:643.5px;top:236.5px;" width="6" height="4" viewBox="0 0 6 4"><path d="M0.7 0.8 L3 3.1 L5.3 0.8" fill="none" stroke="#c0c0c0" stroke-width="1"/></svg>
<svg style="left:680px;top:206.5px;" width="11" height="11" viewBox="0 0 11 11"><path d="M1 0.5 V10.5 M3.4 0.5 V10.5 M5.8 0.5 V10.5" stroke="#b0b0b0" stroke-width="0.9"/><path d="M7.4 10 L9 4.4 L10.6 10 M8 8 H10" fill="none" stroke="#b0b0b0" stroke-width="0.8"/></svg>
<span class="t" style="top:207.38px;font-size:9px;line-height:9px;color:#a6a6a6;left:693.50px;transform:scaleX(0.9061);transform-origin:0 0;">Напрямок тексту</span>
<svg style="left:759px;top:209.5px;" width="6" height="4" viewBox="0 0 6 4"><path d="M0.7 0.8 L3 3.1 L5.3 0.8" fill="none" stroke="#c0c0c0" stroke-width="1"/></svg>
<svg style="left:680px;top:222px;" width="11" height="11" viewBox="0 0 11 11"><rect x="0.5" y="0.5" width="10" height="10" fill="none" stroke="#b0b0b0" stroke-width="0.9"/><path d="M3 5.5 H8 M5.5 1.6 V3.6 M5.5 7.4 V9.4" stroke="#b0b0b0" stroke-width="0.8"/></svg>
<span class="t" style="top:223.08px;font-size:9px;line-height:9px;color:#a6a6a6;left:693.50px;transform:scaleX(0.8864);transform-origin:0 0;">Вирівняти текст</span>
<svg style="left:754px;top:225px;" width="6" height="4" viewBox="0 0 6 4"><path d="M0.7 0.8 L3 3.1 L5.3 0.8" fill="none" stroke="#c0c0c0" stroke-width="1"/></svg>
<svg style="left:680px;top:238.6px;" width="12" height="11" viewBox="0 0 12 11"><path d="M0.5 1 H7 M1.6 3 H8" stroke="#b0b0b0" stroke-width="0.9"/><rect x="4.5" y="4.4" width="7" height="6" fill="none" stroke="#b0b0b0" stroke-width="0.9"/><path d="M6 6.4 H10 M6 8.4 H10" stroke="#c0c0c0" stroke-width="0.7"/></svg>
<span class="t" style="top:238.88px;font-size:9px;line-height:9px;color:#a6a6a6;left:693.50px;transform:scaleX(0.9048);transform-origin:0 0;">Перетворити на об’єкт SmartArt</span>
<svg style="left:814.7px;top:241px;" width="6" height="4" viewBox="0 0 6 4"><path d="M0.7 0.8 L3 3.1 L5.3 0.8" fill="none" stroke="#c0c0c0" stroke-width="1"/></svg>
<div style="left:836.5px;top:206px;width:84px;height:41.5px;background:#ffffff;box-shadow:inset 0 0 0 1px #dcdcdc;"></div>
<div style="left:921.5px;top:206px;width:16px;height:41.5px;background:#f7f7f7;box-shadow:inset 0 0 0 1px #9a9a9a;"></div>
<svg style="left:926px;top:222px;" width="7" height="8" viewBox="0 0 7 8"><path d="M0.6 0.8 H6.4" stroke="#555" stroke-width="0.9"/><path d="M0.8 3 L3.5 5.8 L6.2 3 Z" fill="#555"/></svg>
<svg style="left:836.5px;top:206px;" width="84" height="42" viewBox="0 0 84 42"><rect x="3.4" y="3.2" width="10" height="7.6" fill="#fff" stroke="#4d4d4d" stroke-width="0.8"/><path d="M5 5.4 H9 M5 7.2 H12 M5 9 H12" stroke="#5b87c4" stroke-width="0.7"/><path d="M18 3 L27 11" stroke="#4d4d4d" stroke-width="0.8"/><path d="M31.5 3 L40.5 11 M40.5 11 L38 10.6 M40.5 11 L40 8.6" stroke="#4d4d4d" stroke-width="0.8" fill="none"/><rect x="44.4" y="3.6" width="10" height="7" fill="none" stroke="#4d4d4d" stroke-width="0.8"/><ellipse cx="63" cy="7" rx="5.2" ry="3.6" fill="none" stroke="#4d4d4d" stroke-width="0.8"/><rect x="71.6" y="3.6" width="10.4" height="7" rx="2" fill="none" stroke="#4d4d4d" stroke-width="0.8"/><path d="M8 16.6 L12.4 24.6 H3.6 Z" fill="none" stroke="#4d4d4d" stroke-width="0.8"/><path d="M17.5 17 H22 V24.6 H27" fill="none" stroke="#4d4d4d" stroke-width="0.8"/><path d="M31 17 H35.6 V24.6 H40.4 M40.4 24.6 L38.8 23.2 M40.4 24.6 L38.8 26" fill="none" stroke="#4d4d4d" stroke-width="0.8"/><path d="M44.6 19 H50 V16.6 L54.4 20.8 L50 25 V22.6 H44.6 Z" fill="none" stroke="#4d4d4d" stroke-width="0.8"/><path d="M61.2 16.4 H64.8 V21 H67.4 L63 25.4 L58.6 21 H61.2 Z" fill="none" stroke="#4d4d4d" stroke-width="0.8"/><path d="M72.4 24.6 V19 A3 3 0 0 1 78 18 A3.4 3.4 0 0 1 81.6 22 L79 24.6 Z" fill="none" stroke="#4d4d4d" stroke-width="0.8"/><path d="M6 30.4 C9 30 10 32 7 33.4 C5 34.4 6 36 8.4 35.4 C10 35 10 37.4 8.6 38.4 M8.6 38.4 L7.4 36.6" fill="none" stroke="#4d4d4d" stroke-width="0.8"/><path d="M17.4 31 C23 31 26 34 27 38.6" fill="none" stroke="#4d4d4d" stroke-width="0.8"/><path d="M31 38 C33.4 38 33.6 31 36 31 C38.4 31 38.4 38 41 38" fill="none" stroke="#4d4d4d" stroke-width="0.8"/><path d="M50.4 30.6 C48.6 30.6 49.4 34 48 34.4 C49.4 34.8 48.6 38.4 50.4 38.4" fill="none" stroke="#4d4d4d" stroke-width="0.8"/><path d="M62 30.6 C63.8 30.6 63 34 64.4 34.4 C63 34.8 63.8 38.4 62 38.4" fill="none" stroke="#4d4d4d" stroke-width="0.8"/><path d="M77 30 L78.4 33.2 L81.8 33.4 L79.2 35.6 L80 39 L77 37.2 L74 39 L74.8 35.6 L72.2 33.4 L75.6 33.2 Z" fill="none" stroke="#4d4d4d" stroke-width="0.8"/></svg>
<svg style="left:956.5px;top:205.5px;" width="20" height="20" viewBox="0 0 20 20"><rect x="1" y="1" width="7.4" height="7.4" fill="#fff" stroke="#6a6a6a" stroke-width="0.9"/><rect x="5.2" y="5.4" width="9.6" height="9.6" fill="#ebc872"/><rect x="11" y="11.4" width="7.6" height="7.6" fill="#fff" stroke="#6a6a6a" stroke-width="0.9"/></svg>
<span class="t" style="top:230.98px;font-size:9px;line-height:9px;color:#1e1e1e;left:938.60px;transform:scaleX(0.8936);transform-origin:50% 0;">Упорядкувати</span>
<svg style="left:964.3px;top:243.5px;" width="6" height="4" viewBox="0 0 6 4"><path d="M0.7 0.8 L3 3.1 L5.3 0.8" fill="none" stroke="#444" stroke-width="1"/></svg>
<svg style="left:1004px;top:206px;" width="22" height="21" viewBox="0 0 22 21"><rect x="1.4" y="1.4" width="16.5" height="16.5" rx="4" fill="#f8f8f8" stroke="#c8c8c8" stroke-width="1"/><path d="M9 17.6 C12 16.6 16 12 20.6 6.6 L21.4 8 C18 14 14 18.4 10.4 19.8 Z" fill="#c4c4c4"/></svg>
<span class="t" style="top:230.98px;font-size:9px;line-height:9px;color:#a6a6a6;left:993.73px;transform:scaleX(0.8257);transform-origin:50% 0;">Експрес-</span>
<span class="t" style="top:241.18px;font-size:9px;line-height:9px;color:#a6a6a6;left:1000.50px;transform:scaleX(0.9327);transform-origin:0 0;">стилі</span>
<svg style="left:1021.5px;top:243.5px;" width="6" height="4" viewBox="0 0 6 4"><path d="M0.7 0.8 L3 3.1 L5.3 0.8" fill="none" stroke="#c0c0c0" stroke-width="1"/></svg>
<svg style="left:1035px;top:206px;" width="11" height="11" viewBox="0 0 11 11"><path d="M2 5 L6 1.4 L9.6 5 L5.6 9 Z M1 6.6 V9 M2.4 2.4 L4.4 0.8" fill="none" stroke="#b0b0b0" stroke-width="0.9"/></svg>
<span class="t" style="top:207.38px;font-size:9px;line-height:9px;color:#a6a6a6;left:1047.50px;transform:scaleX(0.8947);transform-origin:0 0;">Заливка фігури</span>
<svg style="left:1107px;top:209.5px;" width="6" height="4" viewBox="0 0 6 4"><path d="M0.7 0.8 L3 3.1 L5.3 0.8" fill="none" stroke="#c0c0c0" stroke-width="1"/></svg>
<svg style="left:1035px;top:222px;" width="11" height="11" viewBox="0 0 11 11"><rect x="0.6" y="2" width="8" height="7" rx="1" fill="none" stroke="#b0b0b0" stroke-width="0.9"/><path d="M4 7 L9.6 1.2 L10.6 2.2 L5 8 Z" fill="#b8b8b8"/></svg>
<span class="t" style="top:223.08px;font-size:9px;line-height:9px;color:#a6a6a6;left:1047.50px;transform:scaleX(0.9184);transform-origin:0 0;">Контур фігури</span>
<svg style="left:1103px;top:225px;" width="6" height="4" viewBox="0 0 6 4"><path d="M0.7 0.8 L3 3.1 L5.3 0.8" fill="none" stroke="#c0c0c0" stroke-width="1"/></svg>
<svg style="left:1035px;top:238.6px;" width="11" height="11" viewBox="0 0 11 11"><rect x="2" y="1" width="8" height="6.4" rx="1.2" fill="#e4e4e4" stroke="#b0b0b0" stroke-width="0.9"/><path d="M0.8 4 V9.4 H8" fill="none" stroke="#b8b8b8" stroke-width="0.9"/></svg>
<span class="t" style="top:238.88px;font-size:9px;line-height:9px;color:#a6a6a6;left:1047.50px;transform:scaleX(0.8599);transform-origin:0 0;">Ефекти для фігур</span>
<svg style="left:1113px;top:241px;" width="6" height="4" viewBox="0 0 6 4"><path d="M0.7 0.8 L3 3.1 L5.3 0.8" fill="none" stroke="#c0c0c0" stroke-width="1"/></svg>
<svg style="left:1137.5px;top:206px;" width="11" height="11" viewBox="0 0 11 11"><circle cx="6.4" cy="4.2" r="3.2" fill="none" stroke="#3f5f9a" stroke-width="1.1"/><path d="M4 6.6 L0.8 10" stroke="#3f5f9a" stroke-width="1.3"/></svg>
<span class="t" style="top:207.38px;font-size:9px;line-height:9px;color:#1e1e1e;left:1150.00px;transform:scaleX(0.8887);transform-origin:0 0;">Знайти</span>
<span class="t" style="top:221.07px;font-size:7px;line-height:7px;color:#444;left:1137.00px;transform:scaleX(1.0261);transform-origin:0 0;">ab</span>
<span class="t" style="top:226.57px;font-size:7px;line-height:7px;color:#3f5f9a;left:1139.50px;transform:scaleX(1.0802);transform-origin:0 0;">ac</span>
<span class="t" style="top:223.08px;font-size:9px;line-height:9px;color:#1e1e1e;left:1150.00px;transform:scaleX(0.9132);transform-origin:0 0;">Замінити</span>
<svg style="left:1194.5px;top:225px;" width="6" height="4" viewBox="0 0 6 4"><path d="M0.7 0.8 L3 3.1 L5.3 0.8" fill="none" stroke="#444" stroke-width="1"/></svg>
<svg style="left:1139.5px;top:237.5px;" width="8" height="11" viewBox="0 0 8 11"><path d="M1 0.8 V8.4 L3 6.6 L4.4 9.8 L5.6 9.2 L4.2 6.2 H6.6 Z" fill="#fff" stroke="#555" stroke-width="0.8"/></svg>
<span class="t" style="top:238.88px;font-size:9px;line-height:9px;color:#1e1e1e;left:1150.00px;transform:scaleX(0.8749);transform-origin:0 0;">Виділити</span>
<svg style="left:1185px;top:241px;" width="6" height="4" viewBox="0 0 6 4"><path d="M0.7 0.8 L3 3.1 L5.3 0.8" fill="none" stroke="#444" stroke-width="1"/></svg>
<div style="left:1234.7px;top:212px;width:7px;height:7px;background:#f0941f;border-radius:50%;"></div>
<span class="t" style="top:230.68px;font-size:9px;line-height:9px;color:#1e1e1e;left:1216.31px;transform:scaleX(0.8699);transform-origin:50% 0;">Надбудови</span>
<svg style="left:1410.5px;top:257px;" width="8" height="5" viewBox="0 0 8 5"><path d="M0.8 4.2 L4 1 L7.2 4.2" fill="none" stroke="#555" stroke-width="1"/></svg>
<div style="left:307.6px;top:265px;width:10.5px;height:590px;background:#f0f0f0;"></div>
<div style="left:307.6px;top:266px;width:10.5px;height:10.5px;background:#ffffff;box-shadow:inset 0 0 0 1px #ababab;"></div>
<svg style="left:307.6px;top:266px;" width="10.5" height="10.5" viewBox="0 0 10.5 10.5"><path d="M2.6 6.4 L5.25 3.8 L7.9 6.4 Z" fill="#1a1a1a"/></svg>
<div style="left:307.6px;top:679.5px;width:10.5px;height:149px;background:#ffffff;box-shadow:inset 0 0 0 1px #ababab;"></div>
<div style="left:307.6px;top:843px;width:10.5px;height:10.5px;background:#ffffff;box-shadow:inset 0 0 0 1px #ababab;"></div>
<svg style="left:307.6px;top:843px;" width="10.5" height="10.5" viewBox="0 0 10.5 10.5"><path d="M2.6 4.2 L5.25 6.8 L7.9 4.2 Z" fill="#1a1a1a"/></svg>
<div style="left:319.6px;top:265px;width:1px;height:590px;background:#dbdbdb;"></div>
<div style="left:1413px;top:265px;width:10px;height:556px;background:#ececec;"></div>
<div style="left:1412.7px;top:266.3px;width:10.5px;height:10.5px;background:#ffffff;box-shadow:inset 0 0 0 1px #ababab;"></div>
<svg style="left:1412.7px;top:266.3px;" width="10.5" height="10.5" viewBox="0 0 10.5 10.5"><path d="M2.6 6.4 L5.25 3.8 L7.9 6.4 Z" fill="#1a1a1a"/></svg>
<div style="left:1413px;top:702px;width:10px;height:23px;background:#ffffff;box-shadow:inset 0 0 0 1px #ababab;"></div>
<div style="left:1412.7px;top:773px;width:10.5px;height:10.5px;background:#ffffff;box-shadow:inset 0 0 0 1px #ababab;"></div>
<svg style="left:1412.7px;top:773px;" width="10.5" height="10.5" viewBox="0 0 10.5 10.5"><path d="M2.6 4.2 L5.25 6.8 L7.9 4.2 Z" fill="#1a1a1a"/></svg>
<svg style="left:1414px;top:786px;" width="8" height="22" viewBox="0 0 8 22"><path d="M4 0.6 L7.4 4 H0.6 Z M4 3.8 L7.4 7.6 H0.6 Z M0.6 12.4 H7.4 L4 16 Z M0.6 15.6 H7.4 L4 19.4 Z" fill="#5a5a5a"/></svg>
<div style="left:321.5px;top:821px;width:1102.5px;height:1px;background:#d2d2d2;"></div>
<span class="t" style="top:827.74px;font-size:10px;line-height:10px;color:#4a4a4a;left:329.80px;transform:scaleX(0.9788);transform-origin:0 0;">Нотатки до слайда</span>
<div style="left:109px;top:854.6px;width:1315px;height:10px;background:#f1f1f1;"></div>
<div style="left:109px;top:854.2px;width:1315px;height:0.8px;background:#dcdcdc;"></div>
<span class="t" style="top:859.38px;font-size:9px;line-height:9px;color:#3a3a3a;left:117.50px;transform:scaleX(0.8094);transform-origin:0 0;">Слайд 19 з 21</span>
<svg style="left:178.5px;top:857px;" width="11" height="8" viewBox="0 0 11 8"><path d="M0.6 0.6 H6.4 V7.4 M0.6 0.6 V8 M8 2 L10.4 0.6 V5 L7 8" fill="none" stroke="#555" stroke-width="0.9"/></svg>
<span class="t" style="top:859.38px;font-size:9px;line-height:9px;color:#3a3a3a;left:199.00px;transform:scaleX(0.8927);transform-origin:0 0;">українська</span>
<svg style="left:250px;top:856.5px;" width="11" height="8" viewBox="0 0 11 8"><circle cx="5" cy="6" r="4" fill="none" stroke="#555" stroke-width="0.9"/><circle cx="5" cy="1.6" r="1" fill="#555"/><path d="M8 2.4 L10.4 0.6" stroke="#555" stroke-width="0.9"/></svg>
<span class="t" style="top:859.38px;font-size:9px;line-height:9px;color:#3a3a3a;left:262.50px;transform:scaleX(0.8773);transform-origin:0 0;">Спеціальні можливості: усе добре</span>
<svg style="left:1058px;top:857px;" width="9" height="7" viewBox="0 0 9 7"><path d="M4.5 0.4 L7 3 H2 Z" fill="#555"/><path d="M0.4 4.6 H8.6 M0.4 6.6 H8.6" stroke="#555" stroke-width="0.9"/></svg>
<span class="t" style="top:859.38px;font-size:9px;line-height:9px;color:#3a3a3a;left:1070.00px;transform:scaleX(0.8816);transform-origin:0 0;">Нотатки</span>
<div style="left:1112.8px;top:856.8px;width:9.5px;height:8px;background:#6a6a6a;border-radius:1px;"></div>
<span class="t" style="top:859.38px;font-size:9px;line-height:9px;color:#3a3a3a;left:1125.40px;transform:scaleX(0.9158);transform-origin:0 0;">Примітки</span>
<div style="left:1173.6px;top:854.8px;width:27px;height:10px;background:#c9c9c9;"></div>
<svg style="left:1182.5px;top:857.5px;" width="9" height="7" viewBox="0 0 9 7"><rect x="0.5" y="0.5" width="8" height="7" fill="none" stroke="#444" stroke-width="0.9"/><rect x="3.2" y="2.6" width="2.6" height="2" fill="#444"/></svg>
<svg style="left:1209.5px;top:857.5px;" width="9" height="7" viewBox="0 0 9 7"><rect x="0.5" y="0.5" width="3" height="3" fill="none" stroke="#555" stroke-width="0.8"/><rect x="5.4" y="0.5" width="3" height="3" fill="none" stroke="#555" stroke-width="0.8"/><rect x="0.5" y="5.4" width="3" height="3" fill="none" stroke="#555" stroke-width="0.8"/><rect x="5.4" y="5.4" width="3" height="3" fill="none" stroke="#555" stroke-width="0.8"/></svg>
<svg style="left:1236.5px;top:857.5px;" width="9" height="7" viewBox="0 0 9 7"><path d="M0.5 0.5 H8.5 V7 H0.5 Z M4.5 0.5 V7 M1.6 2.4 H3.4 M1.6 4.4 H3.4 M5.6 2.4 H7.4 M5.6 4.4 H7.4" fill="none" stroke="#555" stroke-width="0.8"/></svg>
<svg style="left:1264px;top:857.5px;" width="9" height="7" viewBox="0 0 9 7"><path d="M0.5 0.8 H8.5 M1.4 0.8 V4.6 H7.6 V0.8" fill="none" stroke="#555" stroke-width="0.9"/></svg>
<div style="left:1286.5px;top:861.6px;width:5px;height:1px;background:#444;"></div>
<div style="left:1296px;top:861.6px;width:67.5px;height:1px;background:#555;"></div>
<div style="left:1329.8px;top:857.6px;width:2.6px;height:7px;background:#444;"></div>
<span class="t" style="top:858.13px;font-size:10px;line-height:10px;color:#444;left:1367.50px;">+</span>
<span class="t" style="top:859.38px;font-size:9px;line-height:9px;color:#3a3a3a;left:1382.00px;transform:scaleX(0.7834);transform-origin:0 0;">108 %</span>
<svg style="left:1411px;top:857.5px;" width="9" height="7" viewBox="0 0 9 7"><rect x="0.5" y="0.5" width="8" height="7" fill="none" stroke="#555" stroke-width="0.8"/><path d="M2 3 V2 H3 M6 2 H7 V3 M2 5 V6 H3" fill="none" stroke="#555" stroke-width="0.8"/></svg>
<span class="t" style="top:270.11px;font-size:10.5px;line-height:10.5px;color:#4d4d4d;left:112.60px;transform:scaleX(0.8898);transform-origin:0 0;">16</span>
<span class="t" style="top:375.31px;font-size:10.5px;line-height:10.5px;color:#4d4d4d;left:112.60px;transform:scaleX(0.8898);transform-origin:0 0;">17</span>
<span class="t" style="top:479.91px;font-size:10.5px;line-height:10.5px;color:#4d4d4d;left:112.60px;transform:scaleX(0.8898);transform-origin:0 0;">18</span>
<span class="t" style="top:584.71px;font-size:10.5px;line-height:10.5px;color:#d8684f;left:112.60px;transform:scaleX(0.8898);transform-origin:0 0;">19</span>
<span class="t" style="top:689.81px;font-size:10.5px;line-height:10.5px;color:#4d4d4d;left:112.60px;transform:scaleX(0.8898);transform-origin:0 0;">20</span>
<span class="t" style="top:794.61px;font-size:10.5px;line-height:10.5px;color:#4d4d4d;left:112.60px;transform:scaleX(0.8898);transform-origin:0 0;">21</span>
<div style="left:133.5px;top:272.6px;width:160.6px;height:90.4px;background:#fff;box-shadow:0 0 0 0.8px #d8d8d8;"></div>
<span class="t" style="top:281.86px;font-size:5.6px;line-height:5.6px;color:#111;font-weight:700;left:137.70px;transform:scaleX(0.9750);transform-origin:0 0;">Депривація: наявність 7 з 13-ти визначених позбавлень</span>
<span class="t" style="top:288.86px;font-size:5.6px;line-height:5.6px;color:#111;font-weight:700;left:137.70px;transform:scaleX(0.9618);transform-origin:0 0;">(за методологією ЄС), 2023 рік</span>
<span class="t" style="top:300.40px;font-size:2.6px;line-height:2.6px;color:#333;font-weight:700;left:155.88px;transform:scaleX(0.9641);transform-origin:50% 0;">Рівень глибокої депривації домогосподарств, %</span>
<span class="t" style="top:303.60px;font-size:2.6px;line-height:2.6px;color:#333;font-weight:700;left:173.24px;transform:scaleX(0.7995);transform-origin:50% 0;">(за методологією ЄС)</span>
<div style="left:172.0px;top:306px;width:0.5px;height:46px;background:#dedede;"></div>
<div style="left:179.4px;top:306px;width:0.5px;height:46px;background:#dedede;"></div>
<div style="left:186.8px;top:306px;width:0.5px;height:46px;background:#dedede;"></div>
<div style="left:194.2px;top:306px;width:0.5px;height:46px;background:#dedede;"></div>
<div style="left:201.6px;top:306px;width:0.5px;height:46px;background:#dedede;"></div>
<div style="left:209.0px;top:306px;width:0.5px;height:46px;background:#dedede;"></div>
<div style="left:216.4px;top:306px;width:0.5px;height:46px;background:#dedede;"></div>
<div style="left:223.8px;top:306px;width:0.5px;height:46px;background:#dedede;"></div>
<div style="left:172px;top:310.9px;width:42px;height:2.6px;background:#8fc04f;"></div>
<span class="t" style="top:311.07px;font-size:2.4px;line-height:2.4px;color:#333;left:148.95px;">з дітьми / без дітей</span>
<div style="left:172px;top:318.0px;width:30px;height:2.6px;background:#8fc04f;"></div>
<span class="t" style="top:318.15px;font-size:2.4px;line-height:2.4px;color:#333;left:156.20px;">одна дитина</span>
<div style="left:172px;top:325.1px;width:27px;height:2.6px;background:#8fc04f;"></div>
<span class="t" style="top:325.23px;font-size:2.4px;line-height:2.4px;color:#333;left:158.48px;">двоє дітей</span>
<div style="left:172px;top:332.1px;width:40.6px;height:2.6px;background:#8fc04f;"></div>
<span class="t" style="top:332.31px;font-size:2.4px;line-height:2.4px;color:#333;left:138.77px;">домогосподарства без дітей</span>
<div style="left:172px;top:339.2px;width:29px;height:2.6px;background:#8fc04f;"></div>
<span class="t" style="top:339.39px;font-size:2.4px;line-height:2.4px;color:#333;left:139.80px;">домогосподарства з дітьми</span>
<div style="left:172px;top:346.3px;width:37.5px;height:2.6px;background:#8fc04f;"></div>
<span class="t" style="top:346.47px;font-size:2.4px;line-height:2.4px;color:#333;left:161.56px;">Україна</span>
<div style="left:246.7px;top:303px;width:0.5px;height:30px;background:#dedede;"></div>
<div style="left:252.7px;top:303px;width:0.5px;height:30px;background:#dedede;"></div>
<div style="left:258.7px;top:303px;width:0.5px;height:30px;background:#dedede;"></div>
<div style="left:264.7px;top:303px;width:0.5px;height:30px;background:#dedede;"></div>
<div style="left:270.7px;top:303px;width:0.5px;height:30px;background:#dedede;"></div>
<div style="left:276.7px;top:303px;width:0.5px;height:30px;background:#dedede;"></div>
<div style="left:282.7px;top:303px;width:0.5px;height:30px;background:#dedede;"></div>
<div style="left:288.7px;top:303px;width:0.5px;height:30px;background:#dedede;"></div>
<div style="left:246.7px;top:305.3px;width:35.2px;height:5.2px;background:#1d9fd1;"></div>
<div style="left:246.7px;top:321.4px;width:28.8px;height:5.2px;background:#1d9fd1;"></div>
<span class="t" style="top:306.97px;font-size:2.4px;line-height:2.4px;color:#333;left:239.27px;">Село</span>
<span class="t" style="top:322.97px;font-size:2.4px;line-height:2.4px;color:#333;left:238.88px;">Місто</span>
<div style="left:133.5px;top:377.6px;width:160.6px;height:90px;background:#fff;box-shadow:0 0 0 0.8px #d8d8d8;"></div>
<span class="t" style="top:381.76px;font-size:4.3px;line-height:4.3px;color:#111;font-weight:700;left:137.00px;transform:scaleX(0.9267);transform-origin:0 0;">Багатовимірна дитяча бідність в Україні (2023 рік)</span>
<span class="t" style="top:387.21px;font-size:4.0px;line-height:4.0px;color:#555;left:137.00px;transform:scaleX(0.9806);transform-origin:0 0;">(Постраждалі: бідних за різними критеріями, %)</span>
<span class="t" style="top:396.05px;font-size:2.3px;line-height:2.3px;color:#2a4a9a;font-weight:700;left:137.00px;">У 2023 році понад</span>
<span class="t" style="top:398.80px;font-size:2.3px;line-height:2.3px;color:#2a4a9a;font-weight:700;left:137.00px;">у 9 відсотків із індекс</span>
<span class="t" style="top:401.55px;font-size:2.3px;line-height:2.3px;color:#2a4a9a;font-weight:700;left:137.00px;">їх у третини відсотка на</span>
<span class="t" style="top:404.30px;font-size:2.3px;line-height:2.3px;color:#2a4a9a;font-weight:700;left:137.00px;">еще часто збігає</span>
<span class="t" style="top:407.05px;font-size:2.3px;line-height:2.3px;color:#2a4a9a;font-weight:700;left:137.00px;">бідність – монетарних</span>
<span class="t" style="top:409.80px;font-size:2.3px;line-height:2.3px;color:#2a4a9a;font-weight:700;left:137.00px;">депривацією та</span>
<span class="t" style="top:412.55px;font-size:2.3px;line-height:2.3px;color:#2a4a9a;font-weight:700;left:137.00px;">дев. критерієм</span>
<span class="t" style="top:415.30px;font-size:2.3px;line-height:2.3px;color:#2a4a9a;font-weight:700;left:137.00px;">долати показників</span>
<span class="t" style="top:418.05px;font-size:2.3px;line-height:2.3px;color:#2a4a9a;font-weight:700;left:137.00px;">життя їх мала та</span>
<span class="t" style="top:420.80px;font-size:2.3px;line-height:2.3px;color:#2a4a9a;font-weight:700;left:137.00px;">перетинаються.</span>
<svg style="left:150px;top:390px;" width="100" height="78" viewBox="0 0 100 78"><circle cx="47.3" cy="23.3" r="17.7" fill="#f5b18a"/><circle cx="33.1" cy="46.6" r="24.7" fill="#7090d4" fill-opacity="0.8"/><circle cx="62.9" cy="46.6" r="19.3" fill="#b3cd86" fill-opacity="0.8"/><ellipse cx="50.5" cy="38" rx="6" ry="2.8" fill="#fbf6e4" stroke="#d9c78a" stroke-width="0.4"/><rect x="35" y="28.5" width="7.4" height="3.6" rx="0.6" fill="#3a62b0"/><rect x="55" y="29" width="6.6" height="3.4" rx="0.6" fill="#3a62b0"/><rect x="45" y="46.5" width="8.4" height="3.8" rx="0.6" fill="#3a62b0"/></svg>
<span class="t" style="top:382.47px;font-size:2.4px;line-height:2.4px;color:#2a4a9a;font-weight:700;left:242.00px;">Монетарна бідність</span>
<span class="t" style="top:386.77px;font-size:2.4px;line-height:2.4px;color:#444;left:242.00px;">Депривація</span>
<span class="t" style="top:391.07px;font-size:2.4px;line-height:2.4px;color:#444;left:242.00px;">Субʼєктивна бідність</span>
<span class="t" style="top:395.37px;font-size:2.4px;line-height:2.4px;color:#2a4a9a;font-weight:700;left:242.00px;">Монетарний критерій</span>
<span class="t" style="top:399.67px;font-size:2.4px;line-height:2.4px;color:#444;left:242.00px;">Деприваційний критерій</span>
<span class="t" style="top:403.97px;font-size:2.4px;line-height:2.4px;color:#444;left:242.00px;">Самооцінка доходів</span>
<span class="t" style="top:408.27px;font-size:2.4px;line-height:2.4px;color:#2a4a9a;font-weight:700;left:242.00px;">Усі три критерії одночасно</span>
<span class="t" style="top:412.57px;font-size:2.4px;line-height:2.4px;color:#444;left:242.00px;">Частка дітей у домогосподарствах</span>
<span class="t" style="top:418.47px;font-size:2.4px;line-height:2.4px;color:#2a4a9a;font-weight:700;left:245.52px;">Розподіл бідних дітей залежно від</span>
<span class="t" style="top:421.47px;font-size:2.4px;line-height:2.4px;color:#2a4a9a;font-weight:700;left:245.99px;">одночасного виконання критеріїв</span>
<svg style="left:246px;top:425px;" width="40" height="24" viewBox="0 0 40 24"><ellipse cx="19" cy="13.6" rx="17" ry="8.6" fill="#8a8a8a"/><ellipse cx="19" cy="11.4" rx="17" ry="8.6" fill="#c4c4c4"/><path d="M19 11.4 L36 11.4 A17 8.6 0 0 1 24 19.6 Z" fill="#f0b41c"/><path d="M19 11.4 L24 19.6 A17 8.6 0 0 1 9 18.4 Z" fill="#f0b41c"/><path d="M19 11.4 L34.5 7.6 A17 8.6 0 0 1 36 11.4 Z" fill="#4d8fd0"/><path d="M19 11.4 L29 4.4 A17 8.6 0 0 1 34.5 7.6 Z" fill="#4d8fd0"/><path d="M19 11.4 L20 2.8 A17 8.6 0 0 1 29 4.4 Z" fill="#93c255"/></svg>
<span class="t" style="top:450.55px;font-size:2.3px;line-height:2.3px;color:#444;left:248.00px;">— бідність за критерієм 1</span>
<span class="t" style="top:453.55px;font-size:2.3px;line-height:2.3px;color:#444;left:248.00px;">одночасно за 2-ма критеріями</span>
<span class="t" style="top:456.55px;font-size:2.3px;line-height:2.3px;color:#444;left:248.00px;">одночасно за 3-ма критеріями</span>
<span class="t" style="top:459.55px;font-size:2.3px;line-height:2.3px;color:#444;left:248.00px;">багатовимірно бідні</span>
<div style="left:133.5px;top:482.5px;width:160.6px;height:89.8px;background:#fff;box-shadow:0 0 0 0.8px #d8d8d8;"></div>
<span class="t" style="top:487.76px;font-size:6.9px;line-height:6.9px;color:#111;font-weight:700;left:137.70px;transform:scaleX(0.9314);transform-origin:0 0;">Участь у програмах соціальної допомоги, 2023</span>
<span class="t" style="top:498.08px;font-size:4.4px;line-height:4.4px;color:#111;font-weight:700;font-style:italic;left:137.70px;transform:scaleX(0.9920);transform-origin:0 0;">Питома вага домогосподарств-реципієнтів основних програм</span>
<span class="t" style="top:503.18px;font-size:4.4px;line-height:4.4px;color:#111;font-weight:700;font-style:italic;left:137.70px;transform:scaleX(1.0150);transform-origin:0 0;">соціальної підтримки, %</span>
<div style="left:137.7px;top:512px;width:150.8px;height:5.6px;background:linear-gradient(90deg,#1b8dc6 0%,#1b6aa8 45%,#22357f 100%);"></div>
<span class="t" style="top:513.80px;font-size:2.6px;line-height:2.6px;color:#fff;font-weight:700;left:157.82px;">Соціальна програма</span>
<span class="t" style="top:513.80px;font-size:2.6px;line-height:2.6px;color:#fff;font-weight:700;left:220.20px;">Україна</span>
<span class="t" style="top:513.80px;font-size:2.6px;line-height:2.6px;color:#fff;font-weight:700;left:249.04px;">Домогосподарства з дітьми</span>
<div style="left:137.7px;top:517.6px;width:66.7px;height:49.2px;background:linear-gradient(90deg,#0f93c8 0%,#0c7cb6 60%,#0b6eab 100%);"></div>
<div style="left:137.7px;top:526.2px;width:66.7px;height:0.5px;background:#3f9fd0;"></div>
<span class="t" style="top:521.00px;font-size:2.3px;line-height:2.3px;color:#fff;font-weight:700;left:139.00px;">Житлові субсидії на оплату житлово-комунальних послуг</span>
<span class="t" style="top:520.68px;font-size:2.8px;line-height:2.8px;color:#444;left:222.27px;">21,7</span>
<span class="t" style="top:520.68px;font-size:2.8px;line-height:2.8px;color:#444;left:264.27px;">28,4</span>
<div style="left:204.4px;top:526.5px;width:84.1px;height:8.700000000000045px;background:#dfe8f4;"></div>
<div style="left:137.7px;top:534.9000000000001px;width:66.7px;height:0.5px;background:#3f9fd0;"></div>
<span class="t" style="top:529.80px;font-size:2.3px;line-height:2.3px;color:#fff;font-weight:700;left:139.00px;">Допомога малозабезпеченим сімʼям</span>
<span class="t" style="top:529.48px;font-size:2.8px;line-height:2.8px;color:#444;left:223.05px;">1,3</span>
<span class="t" style="top:529.48px;font-size:2.8px;line-height:2.8px;color:#444;left:265.05px;">2,9</span>
<div style="left:137.7px;top:540.5px;width:66.7px;height:0.5px;background:#3f9fd0;"></div>
<span class="t" style="top:536.95px;font-size:2.3px;line-height:2.3px;color:#fff;font-weight:700;left:139.00px;">Допомога на дітей одиноким матерям</span>
<span class="t" style="top:536.63px;font-size:2.8px;line-height:2.8px;color:#444;left:223.05px;">0,6</span>
<span class="t" style="top:536.63px;font-size:2.8px;line-height:2.8px;color:#444;left:265.05px;">1,8</span>
<div style="left:204.4px;top:540.8px;width:84.1px;height:5.800000000000068px;background:#dfe8f4;"></div>
<div style="left:137.7px;top:546.3000000000001px;width:66.7px;height:0.5px;background:#3f9fd0;"></div>
<span class="t" style="top:542.65px;font-size:2.3px;line-height:2.3px;color:#fff;font-weight:700;left:139.00px;">Допомога при народженні</span>
<span class="t" style="top:542.33px;font-size:2.8px;line-height:2.8px;color:#444;left:223.05px;">3,1</span>
<span class="t" style="top:542.33px;font-size:2.8px;line-height:2.8px;color:#444;left:264.38px;">11,9</span>
<div style="left:137.7px;top:554.9000000000001px;width:66.7px;height:0.5px;background:#3f9fd0;"></div>
<span class="t" style="top:549.85px;font-size:2.3px;line-height:2.3px;color:#fff;font-weight:700;left:139.00px;">Пільги на оплату житлово-комунальних послуг</span>
<span class="t" style="top:549.53px;font-size:2.8px;line-height:2.8px;color:#444;left:223.05px;">4,1</span>
<span class="t" style="top:549.53px;font-size:2.8px;line-height:2.8px;color:#444;left:265.05px;">1,1</span>
<div style="left:204.4px;top:555.2px;width:84.1px;height:5.599999999999909px;background:#dfe8f4;"></div>
<div style="left:137.7px;top:560.5px;width:66.7px;height:0.5px;background:#3f9fd0;"></div>
<span class="t" style="top:556.95px;font-size:2.3px;line-height:2.3px;color:#fff;font-weight:700;left:139.00px;">Компенсація за догляд</span>
<span class="t" style="top:556.63px;font-size:2.8px;line-height:2.8px;color:#444;left:223.05px;">0,7</span>
<span class="t" style="top:556.63px;font-size:2.8px;line-height:2.8px;color:#444;left:265.05px;">1,2</span>
<div style="left:137.7px;top:566.5px;width:66.7px;height:0.5px;background:#3f9fd0;"></div>
<span class="t" style="top:562.75px;font-size:2.3px;line-height:2.3px;color:#fff;font-weight:700;left:139.00px;">Інші програми</span>
<span class="t" style="top:562.43px;font-size:2.8px;line-height:2.8px;color:#444;left:223.05px;">1,7</span>
<span class="t" style="top:562.43px;font-size:2.8px;line-height:2.8px;color:#444;left:265.05px;">1,8</span>
<div style="left:246px;top:517.6px;width:0.5px;height:49.2px;background:#9ab0c8;"></div>
<div style="left:131.1px;top:584.9px;width:165.8px;height:94.8px;background:#7d1b2b;"></div>
<div style="left:133.1px;top:586.9px;width:161.8px;height:90.8px;background:#ffffff;"></div>
<div class="sc" style="left:66.26px;top:540.39px;width:0;height:0;transform:scale(0.1710);transform-origin:0 0;">
<span class="t" style="top:290.53px;font-size:36px;line-height:36px;color:#0a0a0a;font-weight:700;left:405.20px;transform:scaleX(0.9327);transform-origin:0 0;-webkit-text-stroke:0.9px #0a0a0a;">ОХОПЛЕННЯ ТА ПОТРЕБА В СОЦІАЛЬНИХ ПОСЛУГАХ</span>
<div style="left:405px;top:346px;width:910.5px;height:27px;background:linear-gradient(90deg,#0a9ecb 0%,#0a92c3 18%,#0b7ab2 34.5%,#125f9f 55%,#1b4289 80%,#22307b 100%);"></div>
<div style="left:719px;top:346px;width:1px;height:27px;background:#e8f2f8;"></div>
<span class="t" style="top:352.90px;font-size:15px;line-height:15px;color:#ffffff;font-weight:700;left:725.00px;transform:scaleX(1.0191);transform-origin:0 0;-webkit-text-stroke:0.25px #fff;">Питома вага домогосподарств із соціально вразливими особами у складі, %</span>
<div style="left:405px;top:374px;width:910px;height:27.19999999999999px;background:#ffffff;"></div>
<div style="left:405px;top:401.2px;width:910px;height:28.400000000000034px;background:#dde6f2;"></div>
<div style="left:405px;top:429.6px;width:910px;height:27.599999999999966px;background:#ffffff;"></div>
<div style="left:405px;top:457.2px;width:910px;height:27.80000000000001px;background:#dde6f2;"></div>
<div style="left:405px;top:401.0px;width:910px;height:1px;background:#86adc4;"></div>
<div style="left:405px;top:429.4px;width:910px;height:1px;background:#86adc4;"></div>
<div style="left:405px;top:457.0px;width:910px;height:1px;background:#86adc4;"></div>
<div style="left:719px;top:374.6px;width:1px;height:110.4px;background:#3d7a9c;"></div>
<span class="t" style="top:381.06px;font-size:16px;line-height:16px;color:#1a1a1a;left:411.00px;transform:scaleX(0.9616);transform-origin:0 0;">Отримують соціальні послуги</span>
<span class="t" style="top:409.18px;font-size:15.5px;line-height:15.5px;color:#e01019;font-weight:700;left:411.00px;transform:scaleX(0.9787);transform-origin:0 0;-webkit-text-stroke:0.35px #e01019;">Не отримують соціальних послуг, з них:</span>
<span class="t" style="top:436.66px;font-size:16px;line-height:16px;color:#1a1a1a;left:411.00px;">-</span>
<span class="t" style="top:436.66px;font-size:16px;line-height:16px;color:#1a1a1a;left:427.00px;transform:scaleX(0.9680);transform-origin:0 0;">не потребують</span>
<span class="t" style="top:464.26px;font-size:16px;line-height:16px;color:#e01019;left:411.00px;">-</span>
<span class="t" style="top:464.68px;font-size:15.5px;line-height:15.5px;color:#e01019;font-weight:700;left:427.00px;-webkit-text-stroke:0.35px #e01019;">потребують</span>
<span class="t" style="top:381.06px;font-size:16px;line-height:16px;color:#1a1a1a;left:1002.02px;transform:scaleX(0.9348);transform-origin:50% 0;">11,1</span>
<span class="t" style="top:409.18px;font-size:15.5px;line-height:15.5px;color:#e01019;font-weight:700;left:1001.91px;transform:scaleX(1.0274);transform-origin:50% 0;-webkit-text-stroke:0.3px #e01019;">88,9</span>
<span class="t" style="top:436.66px;font-size:16px;line-height:16px;color:#1a1a1a;left:1001.43px;transform:scaleX(0.9313);transform-origin:50% 0;">68,3</span>
<span class="t" style="top:464.68px;font-size:15.5px;line-height:15.5px;color:#e01019;font-weight:700;left:1001.91px;transform:scaleX(1.0274);transform-origin:50% 0;-webkit-text-stroke:0.3px #e01019;">31,7</span>
<svg style="left:396px;top:276px;" width="943" height="531" viewBox="0 0 943 531"><path d="M40.50 347.04 H523.50" stroke="#6b6b6b" stroke-width="1.25"/><path d="M40.50 335.79 H523.50" stroke="#6b6b6b" stroke-width="1.25"/><path d="M40.50 324.53 H523.50" stroke="#6b6b6b" stroke-width="1.25"/><path d="M40.50 313.28 H523.50" stroke="#6b6b6b" stroke-width="1.25"/><path d="M40.50 302.02 H523.50" stroke="#6b6b6b" stroke-width="1.25"/><path d="M40.50 290.77 H523.50" stroke="#6b6b6b" stroke-width="1.25"/><path d="M40.50 279.51 H523.50" stroke="#6b6b6b" stroke-width="1.25"/><path d="M40.50 268.26 H523.50" stroke="#6b6b6b" stroke-width="1.25"/><path d="M40.50 257.00 H523.50" stroke="#6b6b6b" stroke-width="1.25"/><rect x="54.60" y="266.12" width="18.20" height="92.18" fill="#3254a5"/><rect x="63.80" y="316.54" width="18.40" height="41.76" fill="#e6211e"/><rect x="108.05" y="265.10" width="18.20" height="93.20" fill="#3254a5"/><rect x="117.25" y="317.89" width="18.40" height="40.41" fill="#e6211e"/><rect x="161.50" y="268.82" width="18.20" height="89.48" fill="#3254a5"/><rect x="170.70" y="319.24" width="18.40" height="39.06" fill="#e6211e"/><rect x="214.95" y="265.33" width="18.20" height="92.97" fill="#3254a5"/><rect x="224.15" y="303.04" width="18.40" height="55.26" fill="#e6211e"/><rect x="268.40" y="277.37" width="18.20" height="80.93" fill="#3254a5"/><rect x="277.60" y="302.47" width="18.40" height="55.83" fill="#e6211e"/><rect x="321.85" y="265.10" width="18.20" height="93.20" fill="#3254a5"/><rect x="331.05" y="311.14" width="18.40" height="47.16" fill="#e6211e"/><rect x="375.30" y="265.33" width="18.20" height="92.97" fill="#3254a5"/><rect x="384.50" y="302.13" width="18.40" height="56.17" fill="#e6211e"/><rect x="428.75" y="304.05" width="18.20" height="54.25" fill="#3254a5"/><rect x="437.95" y="297.86" width="18.40" height="60.44" fill="#e6211e"/><rect x="482.20" y="289.87" width="18.20" height="68.43" fill="#3254a5"/><rect x="491.40" y="311.93" width="18.40" height="46.37" fill="#e6211e"/><path d="M40.50 358.30 H523.50" stroke="#3a3a3a" stroke-width="1.1"/><rect x="61.60" y="340.20" width="20.50" height="15.20" fill="#ffffff"/><rect x="115.05" y="340.20" width="20.50" height="15.20" fill="#ffffff"/><rect x="168.50" y="340.20" width="20.50" height="15.20" fill="#ffffff"/><rect x="221.95" y="340.20" width="20.50" height="15.20" fill="#ffffff"/><rect x="275.40" y="340.20" width="20.50" height="15.20" fill="#ffffff"/><rect x="328.85" y="340.20" width="20.50" height="15.20" fill="#ffffff"/><rect x="382.30" y="340.20" width="20.50" height="15.20" fill="#ffffff"/><rect x="435.75" y="340.20" width="20.50" height="15.20" fill="#ffffff"/><rect x="489.20" y="340.20" width="20.50" height="15.20" fill="#ffffff"/><path d="M566.00 344.79 H906.00" stroke="#4a4a4a" stroke-width="1.25"/><path d="M566.00 334.58 H906.00" stroke="#4a4a4a" stroke-width="1.25"/><path d="M566.00 324.37 H906.00" stroke="#4a4a4a" stroke-width="1.25"/><path d="M566.00 314.16 H906.00" stroke="#4a4a4a" stroke-width="1.25"/><path d="M566.00 303.95 H906.00" stroke="#4a4a4a" stroke-width="1.25"/><path d="M566.00 293.74 H906.00" stroke="#4a4a4a" stroke-width="1.25"/><path d="M566.00 283.53 H906.00" stroke="#4a4a4a" stroke-width="1.25"/><path d="M566.00 273.32 H906.00" stroke="#4a4a4a" stroke-width="1.25"/><path d="M566.00 263.11 H906.00" stroke="#4a4a4a" stroke-width="1.25"/><path d="M566.00 252.90 H906.00" stroke="#4a4a4a" stroke-width="1.25"/><rect x="582.90" y="263.11" width="23.00" height="91.89" fill="#3254a5"/><rect x="594.90" y="323.86" width="23.00" height="31.14" fill="#e6211e"/><rect x="650.70" y="261.48" width="23.00" height="93.52" fill="#3254a5"/><rect x="662.70" y="326.92" width="23.00" height="28.08" fill="#e6211e"/><rect x="718.60" y="265.46" width="23.00" height="89.54" fill="#3254a5"/><rect x="730.60" y="298.74" width="23.00" height="56.26" fill="#e6211e"/><rect x="786.40" y="268.73" width="23.00" height="86.27" fill="#3254a5"/><rect x="798.40" y="313.24" width="23.00" height="41.76" fill="#e6211e"/><rect x="853.90" y="275.97" width="23.00" height="79.03" fill="#3254a5"/><rect x="865.90" y="317.43" width="23.00" height="37.57" fill="#e6211e"/><path d="M566.00 355.00 H906.00" stroke="#3a3a3a" stroke-width="1.1"/><rect x="594.90" y="337.70" width="23.00" height="15.20" fill="#ffffff"/><rect x="662.70" y="337.70" width="23.00" height="15.20" fill="#ffffff"/><rect x="730.60" y="337.70" width="23.00" height="15.20" fill="#ffffff"/><rect x="798.40" y="337.70" width="23.00" height="15.20" fill="#ffffff"/><rect x="865.90" y="337.70" width="23.00" height="15.20" fill="#ffffff"/></svg>
<span class="t" style="top:502.65px;font-size:14px;line-height:14px;color:#1a1a1a;left:586.57px;transform:scaleX(0.9612);transform-origin:50% 0;">домогосподарства з дітьми</span>
<span class="t" style="top:630.08px;font-size:9px;line-height:9px;color:#2a2a2a;left:424.28px;transform:scaleX(0.9570);transform-origin:100% 0;">0</span>
<span class="t" style="top:618.83px;font-size:9px;line-height:9px;color:#2a2a2a;left:419.28px;transform:scaleX(0.9585);transform-origin:100% 0;">10</span>
<span class="t" style="top:607.57px;font-size:9px;line-height:9px;color:#2a2a2a;left:419.28px;transform:scaleX(0.9585);transform-origin:100% 0;">20</span>
<span class="t" style="top:596.31px;font-size:9px;line-height:9px;color:#2a2a2a;left:419.28px;transform:scaleX(0.9585);transform-origin:100% 0;">30</span>
<span class="t" style="top:585.06px;font-size:9px;line-height:9px;color:#2a2a2a;left:419.28px;transform:scaleX(0.9585);transform-origin:100% 0;">40</span>
<span class="t" style="top:573.80px;font-size:9px;line-height:9px;color:#2a2a2a;left:419.28px;transform:scaleX(0.9585);transform-origin:100% 0;">50</span>
<span class="t" style="top:562.55px;font-size:9px;line-height:9px;color:#2a2a2a;left:419.28px;transform:scaleX(0.9585);transform-origin:100% 0;">60</span>
<span class="t" style="top:551.29px;font-size:9px;line-height:9px;color:#2a2a2a;left:419.28px;transform:scaleX(0.9585);transform-origin:100% 0;">70</span>
<span class="t" style="top:540.04px;font-size:9px;line-height:9px;color:#2a2a2a;left:419.28px;transform:scaleX(0.9585);transform-origin:100% 0;">80</span>
<span class="t" style="top:528.78px;font-size:9px;line-height:9px;color:#2a2a2a;left:419.28px;transform:scaleX(0.9585);transform-origin:100% 0;">90</span>
<span class="t" style="top:620.21px;font-size:9.2px;line-height:9.2px;color:#2a2a2a;left:459.45px;transform:scaleX(0.8496);transform-origin:50% 0;">37,1</span>
<span class="t" style="top:620.21px;font-size:9.2px;line-height:9.2px;color:#2a2a2a;left:512.90px;transform:scaleX(0.8496);transform-origin:50% 0;">35,9</span>
<span class="t" style="top:620.21px;font-size:9.2px;line-height:9.2px;color:#2a2a2a;left:566.35px;transform:scaleX(0.8496);transform-origin:50% 0;">34,7</span>
<span class="t" style="top:620.21px;font-size:9.2px;line-height:9.2px;color:#2a2a2a;left:619.80px;transform:scaleX(0.8496);transform-origin:50% 0;">49,1</span>
<span class="t" style="top:620.21px;font-size:9.2px;line-height:9.2px;color:#2a2a2a;left:673.25px;transform:scaleX(0.8496);transform-origin:50% 0;">49,6</span>
<span class="t" style="top:620.21px;font-size:9.2px;line-height:9.2px;color:#2a2a2a;left:726.70px;transform:scaleX(0.8496);transform-origin:50% 0;">41,9</span>
<span class="t" style="top:620.21px;font-size:9.2px;line-height:9.2px;color:#2a2a2a;left:780.15px;transform:scaleX(0.8496);transform-origin:50% 0;">49,9</span>
<span class="t" style="top:620.21px;font-size:9.2px;line-height:9.2px;color:#2a2a2a;left:833.60px;transform:scaleX(0.8496);transform-origin:50% 0;">53,7</span>
<span class="t" style="top:620.21px;font-size:9.2px;line-height:9.2px;color:#2a2a2a;left:887.05px;transform:scaleX(0.8496);transform-origin:50% 0;">41,2</span>
<span class="t" style="top:500.65px;font-size:14px;line-height:14px;color:#1a1a1a;left:1032.54px;transform:scaleX(0.9622);transform-origin:50% 0;">домогосподарства без дітей</span>
<span class="t" style="top:626.78px;font-size:9px;line-height:9px;color:#1c1c1c;left:949.88px;transform:scaleX(0.9371);transform-origin:100% 0;">0</span>
<span class="t" style="top:616.57px;font-size:9px;line-height:9px;color:#1c1c1c;left:944.88px;transform:scaleX(0.9385);transform-origin:100% 0;">10</span>
<span class="t" style="top:606.36px;font-size:9px;line-height:9px;color:#1c1c1c;left:944.88px;transform:scaleX(0.9385);transform-origin:100% 0;">20</span>
<span class="t" style="top:596.15px;font-size:9px;line-height:9px;color:#1c1c1c;left:944.88px;transform:scaleX(0.9385);transform-origin:100% 0;">30</span>
<span class="t" style="top:585.94px;font-size:9px;line-height:9px;color:#1c1c1c;left:944.88px;transform:scaleX(0.9385);transform-origin:100% 0;">40</span>
<span class="t" style="top:575.73px;font-size:9px;line-height:9px;color:#1c1c1c;left:944.88px;transform:scaleX(0.9385);transform-origin:100% 0;">50</span>
<span class="t" style="top:565.52px;font-size:9px;line-height:9px;color:#1c1c1c;left:944.88px;transform:scaleX(0.9385);transform-origin:100% 0;">60</span>
<span class="t" style="top:555.31px;font-size:9px;line-height:9px;color:#1c1c1c;left:944.88px;transform:scaleX(0.9385);transform-origin:100% 0;">70</span>
<span class="t" style="top:545.10px;font-size:9px;line-height:9px;color:#1c1c1c;left:944.88px;transform:scaleX(0.9385);transform-origin:100% 0;">80</span>
<span class="t" style="top:534.89px;font-size:9px;line-height:9px;color:#1c1c1c;left:944.88px;transform:scaleX(0.9385);transform-origin:100% 0;">90</span>
<span class="t" style="top:524.68px;font-size:9px;line-height:9px;color:#1c1c1c;left:939.87px;transform:scaleX(0.9314);transform-origin:100% 0;">100</span>
<span class="t" style="top:617.81px;font-size:9.2px;line-height:9.2px;color:#2a2a2a;left:993.45px;transform:scaleX(0.8496);transform-origin:50% 0;">30,5</span>
<span class="t" style="top:617.81px;font-size:9.2px;line-height:9.2px;color:#2a2a2a;left:1061.25px;transform:scaleX(0.8496);transform-origin:50% 0;">27,5</span>
<span class="t" style="top:617.81px;font-size:9.2px;line-height:9.2px;color:#2a2a2a;left:1129.15px;transform:scaleX(0.8496);transform-origin:50% 0;">55,1</span>
<span class="t" style="top:617.81px;font-size:9.2px;line-height:9.2px;color:#2a2a2a;left:1196.95px;transform:scaleX(0.8496);transform-origin:50% 0;">40,9</span>
<span class="t" style="top:617.81px;font-size:9.2px;line-height:9.2px;color:#2a2a2a;left:1264.45px;transform:scaleX(0.8496);transform-origin:50% 0;">36,8</span>
<span class="t" style="left:457.30px;top:715.40px;font-size:13px;line-height:13px;color:#1a1a1a;transform:rotate(-90deg) scaleX(0.8612);transform-origin:0 0;">з дітьми, в т.ч.</span>
<span class="t" style="left:510.50px;top:707.00px;font-size:13px;line-height:13px;color:#1a1a1a;transform:rotate(-90deg) scaleX(0.8663);transform-origin:0 0;">одна дитина</span>
<span class="t" style="left:564.00px;top:696.50px;font-size:13px;line-height:13px;color:#1a1a1a;transform:rotate(-90deg) scaleX(0.8705);transform-origin:0 0;">двоє дітей</span>
<span class="t" style="left:617.20px;top:718.00px;font-size:13px;line-height:13px;color:#1a1a1a;transform:rotate(-90deg) scaleX(0.8475);transform-origin:0 0;">троє та більше</span>
<span class="t" style="left:670.90px;top:708.00px;font-size:13px;line-height:13px;color:#1a1a1a;transform:rotate(-90deg) scaleX(0.8908);transform-origin:0 0;">неповні сім’ї</span>
<span class="t" style="left:710.00px;top:737.30px;font-size:13px;line-height:13px;color:#1a1a1a;transform:rotate(-90deg) scaleX(0.8777);transform-origin:0 0;">де немає жодного</span>
<span class="t" style="left:724.70px;top:707.00px;font-size:13px;line-height:13px;color:#1a1a1a;transform:rotate(-90deg) scaleX(0.8679);transform-origin:0 0;">дорослого із</span>
<span class="t" style="left:740.20px;top:721.70px;font-size:13px;line-height:13px;color:#1a1a1a;transform:rotate(-90deg) scaleX(0.8698);transform-origin:0 0;">вищою освітою</span>
<span class="t" style="left:778.20px;top:674.80px;font-size:13px;line-height:13px;color:#1a1a1a;transform:rotate(-90deg) scaleX(0.7933);transform-origin:0 0;">у СЖО</span>
<span class="t" style="left:824.20px;top:721.70px;font-size:13px;line-height:13px;color:#1a1a1a;transform:rotate(-90deg) scaleX(0.8728);transform-origin:0 0;">щонайменше 1</span>
<span class="t" style="left:839.20px;top:755.00px;font-size:13px;line-height:13px;color:#1a1a1a;transform:rotate(-90deg) scaleX(0.8689);transform-origin:0 0;">дитина з інвалідністю</span>
<span class="t" style="left:877.70px;top:737.30px;font-size:13px;line-height:13px;color:#1a1a1a;transform:rotate(-90deg) scaleX(0.8732);transform-origin:0 0;">де є щонайменше</span>
<span class="t" style="left:892.30px;top:765.40px;font-size:13px;line-height:13px;color:#1a1a1a;transform:rotate(-90deg) scaleX(0.8301);transform-origin:0 0;">1 особа із статусом ВПО</span>
<span class="t" style="left:991.34px;top:720.80px;font-size:12px;line-height:12px;color:#1a1a1a;transform:rotate(-90deg) scaleX(0.9397);transform-origin:0 0;">без дітей, в т.ч.</span>
<span class="t" style="left:1052.34px;top:710.00px;font-size:12px;line-height:12px;color:#1a1a1a;transform:rotate(-90deg) scaleX(1.0035);transform-origin:0 0;">тільки з осіб</span>
<span class="t" style="left:1066.74px;top:722.00px;font-size:12px;line-height:12px;color:#1a1a1a;transform:rotate(-90deg) scaleX(0.9637);transform-origin:0 0;">пенсійного віку</span>
<span class="t" style="left:1126.84px;top:674.00px;font-size:12px;line-height:12px;color:#1a1a1a;transform:rotate(-90deg) scaleX(0.8387);transform-origin:0 0;">у СЖО</span>
<span class="t" style="left:1179.24px;top:736.80px;font-size:12px;line-height:12px;color:#1a1a1a;transform:rotate(-90deg) scaleX(0.9411);transform-origin:0 0;">де є щонайменше</span>
<span class="t" style="left:1194.34px;top:692.80px;font-size:12px;line-height:12px;color:#1a1a1a;transform:rotate(-90deg) scaleX(0.9361);transform-origin:0 0;">1 особа із</span>
<span class="t" style="left:1209.14px;top:707.50px;font-size:12px;line-height:12px;color:#1a1a1a;transform:rotate(-90deg) scaleX(0.9538);transform-origin:0 0;">інвалідністю</span>
<span class="t" style="left:1247.04px;top:736.80px;font-size:12px;line-height:12px;color:#1a1a1a;transform:rotate(-90deg) scaleX(0.9411);transform-origin:0 0;">де є щонайменше</span>
<span class="t" style="left:1261.74px;top:739.50px;font-size:12px;line-height:12px;color:#1a1a1a;transform:rotate(-90deg) scaleX(0.9033);transform-origin:0 0;">1 особа із статусом</span>
<span class="t" style="left:1276.34px;top:664.20px;font-size:12px;line-height:12px;color:#1a1a1a;transform:rotate(-90deg) scaleX(0.8549);transform-origin:0 0;">ВПО</span>
<div style="left:530px;top:765px;width:8px;height:8px;background:#3254a5;"></div>
<div style="left:530px;top:780px;width:8px;height:8px;background:#e6211e;"></div>
<span class="t" style="top:763.84px;font-size:12px;line-height:12px;color:#1a1a1a;left:541.00px;transform:scaleX(0.9578);transform-origin:0 0;">Жодних соціальних послуг не отримують</span>
<span class="t" style="top:778.84px;font-size:12px;line-height:12px;color:#1a1a1a;left:541.00px;transform:scaleX(0.9550);transform-origin:0 0;">Не отримують, але потребують соціальні послуги</span>
<div style="left:983.5px;top:761.4px;width:7.5px;height:7.5px;background:#3254a5;"></div>
<div style="left:983.5px;top:775.6px;width:7.5px;height:7.5px;background:#e6211e;"></div>
<span class="t" style="top:760.04px;font-size:12px;line-height:12px;color:#1a1a1a;left:994.60px;transform:scaleX(0.9578);transform-origin:0 0;">Жодних соціальних послуг не отримують</span>
<span class="t" style="top:774.24px;font-size:12px;line-height:12px;color:#1a1a1a;left:994.60px;transform:scaleX(0.9536);transform-origin:0 0;">Не отримують, але потребують соціальні послуги</span>
</div>
<div style="left:133.7px;top:692.5px;width:160.4px;height:89.6px;background:#fff;box-shadow:0 0 0 0.8px #d8d8d8;"></div>
<span class="t" style="top:699.51px;font-size:4.6px;line-height:4.6px;color:#111;font-weight:700;left:136.60px;transform:scaleX(0.9830);transform-origin:0 0;">Самооцінка купівельної спроможності доходів у 2021 та 2023 роках:</span>
<span class="t" style="top:705.41px;font-size:3.3px;line-height:3.3px;color:#666;left:136.60px;transform:scaleX(1.0730);transform-origin:0 0;">зростання частки тих, хто не може забезпечити навіть достатнє харчування в 3,6 рази – з 1,4</span>
<span class="t" style="top:709.61px;font-size:3.3px;line-height:3.3px;color:#666;left:136.60px;transform:scaleX(1.0566);transform-origin:0 0;">до 13,2%; практично незмінна частка тих, кому вистачає лише на їжу та робить заощадження</span>
<div style="left:140px;top:718.8px;width:124px;height:0.4px;background:#f6f6f6;"></div>
<div style="left:140px;top:726.15px;width:124px;height:0.4px;background:#f6f6f6;"></div>
<div style="left:140px;top:733.5px;width:124px;height:0.4px;background:#f6f6f6;"></div>
<div style="left:140px;top:740.8499999999999px;width:124px;height:0.4px;background:#f6f6f6;"></div>
<div style="left:140px;top:748.1999999999999px;width:124px;height:0.4px;background:#f6f6f6;"></div>
<div style="left:140px;top:755.55px;width:124px;height:0.4px;background:#f6f6f6;"></div>
<div style="left:140px;top:762.9px;width:124px;height:0.4px;background:#f6f6f6;"></div>
<span class="t" style="top:717.64px;font-size:2.2px;line-height:2.2px;color:#2a4a9a;font-weight:700;left:195.06px;">ЧАСТКА ЗА 2023</span>
<div style="left:149px;top:753.5px;width:7.8px;height:9.5px;background:#3155a6;"></div>
<div style="left:158.6px;top:753px;width:7.8px;height:10px;background:#e5211f;"></div>
<div style="left:179.2px;top:726.2px;width:7.8px;height:36.8px;background:#3155a6;"></div>
<div style="left:189px;top:733.2px;width:7.8px;height:29.8px;background:#e5211f;"></div>
<div style="left:209.9px;top:738.6px;width:7.8px;height:24.4px;background:#3155a6;"></div>
<div style="left:219.6px;top:738.4px;width:7.8px;height:24.6px;background:#e5211f;"></div>
<div style="left:240.5px;top:760.5px;width:7.8px;height:2.5px;background:#3155a6;"></div>
<div style="left:250.3px;top:754px;width:7.8px;height:9px;background:#e5211f;"></div>
<div style="left:140px;top:763px;width:124px;height:0.5px;background:#bbb;"></div>
<span class="t" style="top:765.05px;font-size:2.3px;line-height:2.3px;color:#222;font-weight:700;left:143.13px;">було достатньо й робили</span>
<span class="t" style="top:767.95px;font-size:2.3px;line-height:2.3px;color:#222;font-weight:700;left:149.96px;">заощадження</span>
<span class="t" style="top:765.05px;font-size:2.3px;line-height:2.3px;color:#222;font-weight:700;left:178.60px;">було достатньо,</span>
<span class="t" style="top:767.95px;font-size:2.3px;line-height:2.3px;color:#222;font-weight:700;left:178.50px;">але заощаджень</span>
<span class="t" style="top:770.85px;font-size:2.3px;line-height:2.3px;color:#222;font-weight:700;left:181.99px;">не робили</span>
<span class="t" style="top:765.05px;font-size:2.3px;line-height:2.3px;color:#222;font-weight:700;left:206.46px;">постійно відмовляли</span>
<span class="t" style="top:767.95px;font-size:2.3px;line-height:2.3px;color:#222;font-weight:700;left:204.08px;">собі в найнеобхіднішому,</span>
<span class="t" style="top:770.85px;font-size:2.3px;line-height:2.3px;color:#222;font-weight:700;left:209.19px;">крім харчування</span>
<span class="t" style="top:765.05px;font-size:2.3px;line-height:2.3px;color:#222;font-weight:700;left:235.39px;">не вдалося забезпечити</span>
<span class="t" style="top:767.95px;font-size:2.3px;line-height:2.3px;color:#222;font-weight:700;left:240.11px;">навіть достатнє</span>
<span class="t" style="top:770.85px;font-size:2.3px;line-height:2.3px;color:#222;font-weight:700;left:242.55px;">харчування</span>
<span class="t" style="top:719.14px;font-size:2.2px;line-height:2.2px;color:#2a4a9a;font-weight:700;left:270.00px;">УКРАЇНА 2021</span>
<span class="t" style="top:727.54px;font-size:2.2px;line-height:2.2px;color:#2a4a9a;font-weight:700;left:270.00px;">УКРАЇНА 2023</span>
<div style="left:133.7px;top:796.6px;width:160.4px;height:58px;background:#fff;box-shadow:0 0 0 0.8px #d8d8d8;"></div>
<span class="t" style="top:802.76px;font-size:4.3px;line-height:4.3px;color:#111;font-weight:700;left:138.00px;transform:scaleX(0.9171);transform-origin:0 0;">Структура сукупних витрат: вплив повномасштабної війни.</span>
<span class="t" style="top:807.96px;font-size:4.3px;line-height:4.3px;color:#111;font-weight:700;left:138.00px;transform:scaleX(0.9189);transform-origin:0 0;">Зменшення частки позахарчових витрат та зростання витрат на харчування</span>
<div style="left:147.3px;top:814px;width:0.4px;height:40px;background:#e2e2e2;"></div>
<div style="left:169.3px;top:814px;width:0.4px;height:40px;background:#e2e2e2;"></div>
<div style="left:191.3px;top:814px;width:0.4px;height:40px;background:#e2e2e2;"></div>
<div style="left:213.3px;top:814px;width:0.4px;height:40px;background:#e2e2e2;"></div>
<div style="left:235.3px;top:814px;width:0.4px;height:40px;background:#e2e2e2;"></div>
<div style="left:257.3px;top:814px;width:0.4px;height:40px;background:#e2e2e2;"></div>
<div style="left:147.3px;top:821.2px;width:57.0px;height:10px;background:#2f63b4;"></div>
<div style="left:204.3px;top:821.2px;width:14.3px;height:10px;background:#ee8a2f;"></div>
<div style="left:218.6px;top:821.2px;width:6.4px;height:10px;background:#bdbdbd;"></div>
<div style="left:225px;top:821.2px;width:6px;height:10px;background:#f4bf1f;"></div>
<div style="left:231px;top:821.2px;width:5px;height:10px;background:#5b9bd5;"></div>
<div style="left:236px;top:821.2px;width:4px;height:10px;background:#8cbf6a;"></div>
<div style="left:240px;top:821.2px;width:4px;height:10px;background:#2a4f95;"></div>
<div style="left:244px;top:821.2px;width:4px;height:10px;background:#a5562a;"></div>
<div style="left:248px;top:821.2px;width:3px;height:10px;background:#8f8f8f;"></div>
<div style="left:251px;top:821.2px;width:3px;height:10px;background:#c99a1a;"></div>
<div style="left:254px;top:821.2px;width:3.6px;height:10px;background:#24603a;"></div>
<div style="left:147.3px;top:844px;width:51.7px;height:10.6px;background:#2f63b4;"></div>
<div style="left:199px;top:844px;width:17px;height:10.6px;background:#ee8a2f;"></div>
<div style="left:216px;top:844px;width:5px;height:10.6px;background:#bdbdbd;"></div>
<div style="left:221px;top:844px;width:5px;height:10.6px;background:#f4bf1f;"></div>
<div style="left:226px;top:844px;width:5px;height:10.6px;background:#5b9bd5;"></div>
<div style="left:231px;top:844px;width:4px;height:10.6px;background:#8cbf6a;"></div>
<div style="left:235px;top:844px;width:9px;height:10.6px;background:#2a4f95;"></div>
<div style="left:244px;top:844px;width:3px;height:10.6px;background:#a5562a;"></div>
<div style="left:247px;top:844px;width:3px;height:10.6px;background:#8f8f8f;"></div>
<div style="left:250px;top:844px;width:3px;height:10.6px;background:#c99a1a;"></div>
<div style="left:253px;top:844px;width:4px;height:10.6px;background:#24603a;"></div>
<span class="t" style="top:825.45px;font-size:2.3px;line-height:2.3px;color:#444;left:138.88px;">2021</span>
<span class="t" style="top:848.45px;font-size:2.3px;line-height:2.3px;color:#444;left:138.88px;">2023</span>
<span class="t" style="top:821.14px;font-size:2.2px;line-height:2.2px;color:#2a4a9a;font-weight:700;left:266.00px;">УКРАЇНА 2021</span>
<span class="t" style="top:829.14px;font-size:2.2px;line-height:2.2px;color:#2a4a9a;font-weight:700;left:266.00px;">УКРАЇНА 2023</span>
<div style="left:396.6px;top:276.8px;width:941.2px;height:529.3px;background:#ffffff;box-shadow:0 0 0 1px #d9d9d9;"></div>
<span class="t" style="top:290.53px;font-size:36px;line-height:36px;color:#0a0a0a;font-weight:700;left:405.20px;transform:scaleX(0.9327);transform-origin:0 0;-webkit-text-stroke:0.9px #0a0a0a;">ОХОПЛЕННЯ ТА ПОТРЕБА В СОЦІАЛЬНИХ ПОСЛУГАХ</span>
<div style="left:405px;top:346px;width:910.5px;height:27px;background:linear-gradient(90deg,#0a9ecb 0%,#0a92c3 18%,#0b7ab2 34.5%,#125f9f 55%,#1b4289 80%,#22307b 100%);"></div>
<div style="left:719px;top:346px;width:1px;height:27px;background:#e8f2f8;"></div>
<span class="t" style="top:352.90px;font-size:15px;line-height:15px;color:#ffffff;font-weight:700;left:725.00px;transform:scaleX(1.0191);transform-origin:0 0;-webkit-text-stroke:0.25px #fff;">Питома вага домогосподарств із соціально вразливими особами у складі, %</span>
<div style="left:405px;top:374px;width:910px;height:27.19999999999999px;background:#ffffff;"></div>
<div style="left:405px;top:401.2px;width:910px;height:28.400000000000034px;background:#dde6f2;"></div>
<div style="left:405px;top:429.6px;width:910px;height:27.599999999999966px;background:#ffffff;"></div>
<div style="left:405px;top:457.2px;width:910px;height:27.80000000000001px;background:#dde6f2;"></div>
<div style="left:405px;top:401.0px;width:910px;height:1px;background:#86adc4;"></div>
<div style="left:405px;top:429.4px;width:910px;height:1px;background:#86adc4;"></div>
<div style="left:405px;top:457.0px;width:910px;height:1px;background:#86adc4;"></div>
<div style="left:719px;top:374.6px;width:1px;height:110.4px;background:#3d7a9c;"></div>
<span class="t" style="top:381.06px;font-size:16px;line-height:16px;color:#1a1a1a;left:411.00px;transform:scaleX(0.9616);transform-origin:0 0;">Отримують соціальні послуги</span>
<span class="t" style="top:409.18px;font-size:15.5px;line-height:15.5px;color:#e01019;font-weight:700;left:411.00px;transform:scaleX(0.9787);transform-origin:0 0;-webkit-text-stroke:0.35px #e01019;">Не отримують соціальних послуг, з них:</span>
<span class="t" style="top:436.66px;font-size:16px;line-height:16px;color:#1a1a1a;left:411.00px;">-</span>
<span class="t" style="top:436.66px;font-size:16px;line-height:16px;color:#1a1a1a;left:427.00px;transform:scaleX(0.9680);transform-origin:0 0;">не потребують</span>
<span class="t" style="top:464.26px;font-size:16px;line-height:16px;color:#e01019;left:411.00px;">-</span>
<span class="t" style="top:464.68px;font-size:15.5px;line-height:15.5px;color:#e01019;font-weight:700;left:427.00px;-webkit-text-stroke:0.35px #e01019;">потребують</span>
<span class="t" style="top:381.06px;font-size:16px;line-height:16px;color:#1a1a1a;left:1002.02px;transform:scaleX(0.9348);transform-origin:50% 0;">11,1</span>
<span class="t" style="top:409.18px;font-size:15.5px;line-height:15.5px;color:#e01019;font-weight:700;left:1001.91px;transform:scaleX(1.0274);transform-origin:50% 0;-webkit-text-stroke:0.3px #e01019;">88,9</span>
<span class="t" style="top:436.66px;font-size:16px;line-height:16px;color:#1a1a1a;left:1001.43px;transform:scaleX(0.9313);transform-origin:50% 0;">68,3</span>
<span class="t" style="top:464.68px;font-size:15.5px;line-height:15.5px;color:#e01019;font-weight:700;left:1001.91px;transform:scaleX(1.0274);transform-origin:50% 0;-webkit-text-stroke:0.3px #e01019;">31,7</span>
<svg style="left:396px;top:276px;" width="943" height="531" viewBox="0 0 943 531"><path d="M40.50 347.04 H523.50" stroke="#6b6b6b" stroke-width="1.25"/><path d="M40.50 335.79 H523.50" stroke="#6b6b6b" stroke-width="1.25"/><path d="M40.50 324.53 H523.50" stroke="#6b6b6b" stroke-width="1.25"/><path d="M40.50 313.28 H523.50" stroke="#6b6b6b" stroke-width="1.25"/><path d="M40.50 302.02 H523.50" stroke="#6b6b6b" stroke-width="1.25"/><path d="M40.50 290.77 H523.50" stroke="#6b6b6b" stroke-width="1.25"/><path d="M40.50 279.51 H523.50" stroke="#6b6b6b" stroke-width="1.25"/><path d="M40.50 268.26 H523.50" stroke="#6b6b6b" stroke-width="1.25"/><path d="M40.50 257.00 H523.50" stroke="#6b6b6b" stroke-width="1.25"/><rect x="54.60" y="266.12" width="18.20" height="92.18" fill="#3254a5"/><rect x="63.80" y="316.54" width="18.40" height="41.76" fill="#e6211e"/><rect x="108.05" y="265.10" width="18.20" height="93.20" fill="#3254a5"/><rect x="117.25" y="317.89" width="18.40" height="40.41" fill="#e6211e"/><rect x="161.50" y="268.82" width="18.20" height="89.48" fill="#3254a5"/><rect x="170.70" y="319.24" width="18.40" height="39.06" fill="#e6211e"/><rect x="214.95" y="265.33" width="18.20" height="92.97" fill="#3254a5"/><rect x="224.15" y="303.04" width="18.40" height="55.26" fill="#e6211e"/><rect x="268.40" y="277.37" width="18.20" height="80.93" fill="#3254a5"/><rect x="277.60" y="302.47" width="18.40" height="55.83" fill="#e6211e"/><rect x="321.85" y="265.10" width="18.20" height="93.20" fill="#3254a5"/><rect x="331.05" y="311.14" width="18.40" height="47.16" fill="#e6211e"/><rect x="375.30" y="265.33" width="18.20" height="92.97" fill="#3254a5"/><rect x="384.50" y="302.13" width="18.40" height="56.17" fill="#e6211e"/><rect x="428.75" y="304.05" width="18.20" height="54.25" fill="#3254a5"/><rect x="437.95" y="297.86" width="18.40" height="60.44" fill="#e6211e"/><rect x="482.20" y="289.87" width="18.20" height="68.43" fill="#3254a5"/><rect x="491.40" y="311.93" width="18.40" height="46.37" fill="#e6211e"/><path d="M40.50 358.30 H523.50" stroke="#3a3a3a" stroke-width="1.1"/><rect x="61.60" y="340.20" width="20.50" height="15.20" fill="#ffffff"/><rect x="115.05" y="340.20" width="20.50" height="15.20" fill="#ffffff"/><rect x="168.50" y="340.20" width="20.50" height="15.20" fill="#ffffff"/><rect x="221.95" y="340.20" width="20.50" height="15.20" fill="#ffffff"/><rect x="275.40" y="340.20" width="20.50" height="15.20" fill="#ffffff"/><rect x="328.85" y="340.20" width="20.50" height="15.20" fill="#ffffff"/><rect x="382.30" y="340.20" width="20.50" height="15.20" fill="#ffffff"/><rect x="435.75" y="340.20" width="20.50" height="15.20" fill="#ffffff"/><rect x="489.20" y="340.20" width="20.50" height="15.20" fill="#ffffff"/><path d="M566.00 344.79 H906.00" stroke="#4a4a4a" stroke-width="1.25"/><path d="M566.00 334.58 H906.00" stroke="#4a4a4a" stroke-width="1.25"/><path d="M566.00 324.37 H906.00" stroke="#4a4a4a" stroke-width="1.25"/><path d="M566.00 314.16 H906.00" stroke="#4a4a4a" stroke-width="1.25"/><path d="M566.00 303.95 H906.00" stroke="#4a4a4a" stroke-width="1.25"/><path d="M566.00 293.74 H906.00" stroke="#4a4a4a" stroke-width="1.25"/><path d="M566.00 283.53 H906.00" stroke="#4a4a4a" stroke-width="1.25"/><path d="M566.00 273.32 H906.00" stroke="#4a4a4a" stroke-width="1.25"/><path d="M566.00 263.11 H906.00" stroke="#4a4a4a" stroke-width="1.25"/><path d="M566.00 252.90 H906.00" stroke="#4a4a4a" stroke-width="1.25"/><rect x="582.90" y="263.11" width="23.00" height="91.89" fill="#3254a5"/><rect x="594.90" y="323.86" width="23.00" height="31.14" fill="#e6211e"/><rect x="650.70" y="261.48" width="23.00" height="93.52" fill="#3254a5"/><rect x="662.70" y="326.92" width="23.00" height="28.08" fill="#e6211e"/><rect x="718.60" y="265.46" width="23.00" height="89.54" fill="#3254a5"/><rect x="730.60" y="298.74" width="23.00" height="56.26" fill="#e6211e"/><rect x="786.40" y="268.73" width="23.00" height="86.27" fill="#3254a5"/><rect x="798.40" y="313.24" width="23.00" height="41.76" fill="#e6211e"/><rect x="853.90" y="275.97" width="23.00" height="79.03" fill="#3254a5"/><rect x="865.90" y="317.43" width="23.00" height="37.57" fill="#e6211e"/><path d="M566.00 355.00 H906.00" stroke="#3a3a3a" stroke-width="1.1"/><rect x="594.90" y="337.70" width="23.00" height="15.20" fill="#ffffff"/><rect x="662.70" y="337.70" width="23.00" height="15.20" fill="#ffffff"/><rect x="730.60" y="337.70" width="23.00" height="15.20" fill="#ffffff"/><rect x="798.40" y="337.70" width="23.00" height="15.20" fill="#ffffff"/><rect x="865.90" y="337.70" width="23.00" height="15.20" fill="#ffffff"/></svg>
<span class="t" style="top:502.65px;font-size:14px;line-height:14px;color:#1a1a1a;left:586.57px;transform:scaleX(0.9612);transform-origin:50% 0;">домогосподарства з дітьми</span>
<span class="t" style="top:630.08px;font-size:9px;line-height:9px;color:#2a2a2a;left:424.28px;transform:scaleX(0.9570);transform-origin:100% 0;">0</span>
<span class="t" style="top:618.83px;font-size:9px;line-height:9px;color:#2a2a2a;left:419.28px;transform:scaleX(0.9585);transform-origin:100% 0;">10</span>
<span class="t" style="top:607.57px;font-size:9px;line-height:9px;color:#2a2a2a;left:419.28px;transform:scaleX(0.9585);transform-origin:100% 0;">20</span>
<span class="t" style="top:596.31px;font-size:9px;line-height:9px;color:#2a2a2a;left:419.28px;transform:scaleX(0.9585);transform-origin:100% 0;">30</span>
<span class="t" style="top:585.06px;font-size:9px;line-height:9px;color:#2a2a2a;left:419.28px;transform:scaleX(0.9585);transform-origin:100% 0;">40</span>
<span class="t" style="top:573.80px;font-size:9px;line-height:9px;color:#2a2a2a;left:419.28px;transform:scaleX(0.9585);transform-origin:100% 0;">50</span>
<span class="t" style="top:562.55px;font-size:9px;line-height:9px;color:#2a2a2a;left:419.28px;transform:scaleX(0.9585);transform-origin:100% 0;">60</span>
<span class="t" style="top:551.29px;font-size:9px;line-height:9px;color:#2a2a2a;left:419.28px;transform:scaleX(0.9585);transform-origin:100% 0;">70</span>
<span class="t" style="top:540.04px;font-size:9px;line-height:9px;color:#2a2a2a;left:419.28px;transform:scaleX(0.9585);transform-origin:100% 0;">80</span>
<span class="t" style="top:528.78px;font-size:9px;line-height:9px;color:#2a2a2a;left:419.28px;transform:scaleX(0.9585);transform-origin:100% 0;">90</span>
<span class="t" style="top:620.21px;font-size:9.2px;line-height:9.2px;color:#2a2a2a;left:459.45px;transform:scaleX(0.8496);transform-origin:50% 0;">37,1</span>
<span class="t" style="top:620.21px;font-size:9.2px;line-height:9.2px;color:#2a2a2a;left:512.90px;transform:scaleX(0.8496);transform-origin:50% 0;">35,9</span>
<span class="t" style="top:620.21px;font-size:9.2px;line-height:9.2px;color:#2a2a2a;left:566.35px;transform:scaleX(0.8496);transform-origin:50% 0;">34,7</span>
<span class="t" style="top:620.21px;font-size:9.2px;line-height:9.2px;color:#2a2a2a;left:619.80px;transform:scaleX(0.8496);transform-origin:50% 0;">49,1</span>
<span class="t" style="top:620.21px;font-size:9.2px;line-height:9.2px;color:#2a2a2a;left:673.25px;transform:scaleX(0.8496);transform-origin:50% 0;">49,6</span>
<span class="t" style="top:620.21px;font-size:9.2px;line-height:9.2px;color:#2a2a2a;left:726.70px;transform:scaleX(0.8496);transform-origin:50% 0;">41,9</span>
<span class="t" style="top:620.21px;font-size:9.2px;line-height:9.2px;color:#2a2a2a;left:780.15px;transform:scaleX(0.8496);transform-origin:50% 0;">49,9</span>
<span class="t" style="top:620.21px;font-size:9.2px;line-height:9.2px;color:#2a2a2a;left:833.60px;transform:scaleX(0.8496);transform-origin:50% 0;">53,7</span>
<span class="t" style="top:620.21px;font-size:9.2px;line-height:9.2px;color:#2a2a2a;left:887.05px;transform:scaleX(0.8496);transform-origin:50% 0;">41,2</span>
<span class="t" style="top:500.65px;font-size:14px;line-height:14px;color:#1a1a1a;left:1032.54px;transform:scaleX(0.9622);transform-origin:50% 0;">домогосподарства без дітей</span>
<span class="t" style="top:626.78px;font-size:9px;line-height:9px;color:#1c1c1c;left:949.88px;transform:scaleX(0.9371);transform-origin:100% 0;">0</span>
<span class="t" style="top:616.57px;font-size:9px;line-height:9px;color:#1c1c1c;left:944.88px;transform:scaleX(0.9385);transform-origin:100% 0;">10</span>
<span class="t" style="top:606.36px;font-size:9px;line-height:9px;color:#1c1c1c;left:944.88px;transform:scaleX(0.9385);transform-origin:100% 0;">20</span>
<span class="t" style="top:596.15px;font-size:9px;line-height:9px;color:#1c1c1c;left:944.88px;transform:scaleX(0.9385);transform-origin:100% 0;">30</span>
<span class="t" style="top:585.94px;font-size:9px;line-height:9px;color:#1c1c1c;left:944.88px;transform:scaleX(0.9385);transform-origin:100% 0;">40</span>
<span class="t" style="top:575.73px;font-size:9px;line-height:9px;color:#1c1c1c;left:944.88px;transform:scaleX(0.9385);transform-origin:100% 0;">50</span>
<span class="t" style="top:565.52px;font-size:9px;line-height:9px;color:#1c1c1c;left:944.88px;transform:scaleX(0.9385);transform-origin:100% 0;">60</span>
<span class="t" style="top:555.31px;font-size:9px;line-height:9px;color:#1c1c1c;left:944.88px;transform:scaleX(0.9385);transform-origin:100% 0;">70</span>
<span class="t" style="top:545.10px;font-size:9px;line-height:9px;color:#1c1c1c;left:944.88px;transform:scaleX(0.9385);transform-origin:100% 0;">80</span>
<span class="t" style="top:534.89px;font-size:9px;line-height:9px;color:#1c1c1c;left:944.88px;transform:scaleX(0.9385);transform-origin:100% 0;">90</span>
<span class="t" style="top:524.68px;font-size:9px;line-height:9px;color:#1c1c1c;left:939.87px;transform:scaleX(0.9314);transform-origin:100% 0;">100</span>
<span class="t" style="top:617.81px;font-size:9.2px;line-height:9.2px;color:#2a2a2a;left:993.45px;transform:scaleX(0.8496);transform-origin:50% 0;">30,5</span>
<span class="t" style="top:617.81px;font-size:9.2px;line-height:9.2px;color:#2a2a2a;left:1061.25px;transform:scaleX(0.8496);transform-origin:50% 0;">27,5</span>
<span class="t" style="top:617.81px;font-size:9.2px;line-height:9.2px;color:#2a2a2a;left:1129.15px;transform:scaleX(0.8496);transform-origin:50% 0;">55,1</span>
<span class="t" style="top:617.81px;font-size:9.2px;line-height:9.2px;color:#2a2a2a;left:1196.95px;transform:scaleX(0.8496);transform-origin:50% 0;">40,9</span>
<span class="t" style="top:617.81px;font-size:9.2px;line-height:9.2px;color:#2a2a2a;left:1264.45px;transform:scaleX(0.8496);transform-origin:50% 0;">36,8</span>
<span class="t" style="left:457.30px;top:715.40px;font-size:13px;line-height:13px;color:#1a1a1a;transform:rotate(-90deg) scaleX(0.8612);transform-origin:0 0;">з дітьми, в т.ч.</span>
<span class="t" style="left:510.50px;top:707.00px;font-size:13px;line-height:13px;color:#1a1a1a;transform:rotate(-90deg) scaleX(0.8663);transform-origin:0 0;">одна дитина</span>
<span class="t" style="left:564.00px;top:696.50px;font-size:13px;line-height:13px;color:#1a1a1a;transform:rotate(-90deg) scaleX(0.8705);transform-origin:0 0;">двоє дітей</span>
<span class="t" style="left:617.20px;top:718.00px;font-size:13px;line-height:13px;color:#1a1a1a;transform:rotate(-90deg) scaleX(0.8475);transform-origin:0 0;">троє та більше</span>
<span class="t" style="left:670.90px;top:708.00px;font-size:13px;line-height:13px;color:#1a1a1a;transform:rotate(-90deg) scaleX(0.8908);transform-origin:0 0;">неповні сім’ї</span>
<span class="t" style="left:710.00px;top:737.30px;font-size:13px;line-height:13px;color:#1a1a1a;transform:rotate(-90deg) scaleX(0.8777);transform-origin:0 0;">де немає жодного</span>
<span class="t" style="left:724.70px;top:707.00px;font-size:13px;line-height:13px;color:#1a1a1a;transform:rotate(-90deg) scaleX(0.8679);transform-origin:0 0;">дорослого із</span>
<span class="t" style="left:740.20px;top:721.70px;font-size:13px;line-height:13px;color:#1a1a1a;transform:rotate(-90deg) scaleX(0.8698);transform-origin:0 0;">вищою освітою</span>
<span class="t" style="left:778.20px;top:674.80px;font-size:13px;line-height:13px;color:#1a1a1a;transform:rotate(-90deg) scaleX(0.7933);transform-origin:0 0;">у СЖО</span>
<span class="t" style="left:824.20px;top:721.70px;font-size:13px;line-height:13px;color:#1a1a1a;transform:rotate(-90deg) scaleX(0.8728);transform-origin:0 0;">щонайменше 1</span>
<span class="t" style="left:839.20px;top:755.00px;font-size:13px;line-height:13px;color:#1a1a1a;transform:rotate(-90deg) scaleX(0.8689);transform-origin:0 0;">дитина з інвалідністю</span>
<span class="t" style="left:877.70px;top:737.30px;font-size:13px;line-height:13px;color:#1a1a1a;transform:rotate(-90deg) scaleX(0.8732);transform-origin:0 0;">де є щонайменше</span>
<span class="t" style="left:892.30px;top:765.40px;font-size:13px;line-height:13px;color:#1a1a1a;transform:rotate(-90deg) scaleX(0.8301);transform-origin:0 0;">1 особа із статусом ВПО</span>
<span class="t" style="left:991.34px;top:720.80px;font-size:12px;line-height:12px;color:#1a1a1a;transform:rotate(-90deg) scaleX(0.9397);transform-origin:0 0;">без дітей, в т.ч.</span>
<span class="t" style="left:1052.34px;top:710.00px;font-size:12px;line-height:12px;color:#1a1a1a;transform:rotate(-90deg) scaleX(1.0035);transform-origin:0 0;">тільки з осіб</span>
<span class="t" style="left:1066.74px;top:722.00px;font-size:12px;line-height:12px;color:#1a1a1a;transform:rotate(-90deg) scaleX(0.9637);transform-origin:0 0;">пенсійного віку</span>
<span class="t" style="left:1126.84px;top:674.00px;font-size:12px;line-height:12px;color:#1a1a1a;transform:rotate(-90deg) scaleX(0.8387);transform-origin:0 0;">у СЖО</span>
<span class="t" style="left:1179.24px;top:736.80px;font-size:12px;line-height:12px;color:#1a1a1a;transform:rotate(-90deg) scaleX(0.9411);transform-origin:0 0;">де є щонайменше</span>
<span class="t" style="left:1194.34px;top:692.80px;font-size:12px;line-height:12px;color:#1a1a1a;transform:rotate(-90deg) scaleX(0.9361);transform-origin:0 0;">1 особа із</span>
<span class="t" style="left:1209.14px;top:707.50px;font-size:12px;line-height:12px;color:#1a1a1a;transform:rotate(-90deg) scaleX(0.9538);transform-origin:0 0;">інвалідністю</span>
<span class="t" style="left:1247.04px;top:736.80px;font-size:12px;line-height:12px;color:#1a1a1a;transform:rotate(-90deg) scaleX(0.9411);transform-origin:0 0;">де є щонайменше</span>
<span class="t" style="left:1261.74px;top:739.50px;font-size:12px;line-height:12px;color:#1a1a1a;transform:rotate(-90deg) scaleX(0.9033);transform-origin:0 0;">1 особа із статусом</span>
<span class="t" style="left:1276.34px;top:664.20px;font-size:12px;line-height:12px;color:#1a1a1a;transform:rotate(-90deg) scaleX(0.8549);transform-origin:0 0;">ВПО</span>
<div style="left:530px;top:765px;width:8px;height:8px;background:#3254a5;"></div>
<div style="left:530px;top:780px;width:8px;height:8px;background:#e6211e;"></div>
<span class="t" style="top:763.84px;font-size:12px;line-height:12px;color:#1a1a1a;left:541.00px;transform:scaleX(0.9578);transform-origin:0 0;">Жодних соціальних послуг не отримують</span>
<span class="t" style="top:778.84px;font-size:12px;line-height:12px;color:#1a1a1a;left:541.00px;transform:scaleX(0.9550);transform-origin:0 0;">Не отримують, але потребують соціальні послуги</span>
<div style="left:983.5px;top:761.4px;width:7.5px;height:7.5px;background:#3254a5;"></div>
<div style="left:983.5px;top:775.6px;width:7.5px;height:7.5px;background:#e6211e;"></div>
<span class="t" style="top:760.04px;font-size:12px;line-height:12px;color:#1a1a1a;left:994.60px;transform:scaleX(0.9578);transform-origin:0 0;">Жодних соціальних послуг не отримують</span>
<span class="t" style="top:774.24px;font-size:12px;line-height:12px;color:#1a1a1a;left:994.60px;transform:scaleX(0.9536);transform-origin:0 0;">Не отримують, але потребують соціальні послуги</span>
<svg style="left:686px;top:741px;" width="14" height="20" viewBox="0 0 14 20"><path d="M6 1 L6 11 M1 6 L11 6 M6 1 L4.3 3 M6 1 L7.7 3 M1 6 L3 4.3 M1 6 L3 7.7 M11 6 L9 4.3 M11 6 L9 7.7 M6 11 L4.3 9 M6 11 L7.7 9" stroke="#222" stroke-width="0.9" fill="none"/><path d="M6.2 7 L6.2 16 L8.3 14.2 L10 18 L11.6 17.3 L9.9 13.6 L12.6 13.4 Z" fill="#fff" stroke="#222" stroke-width="0.9"/></svg>
</body></html>
